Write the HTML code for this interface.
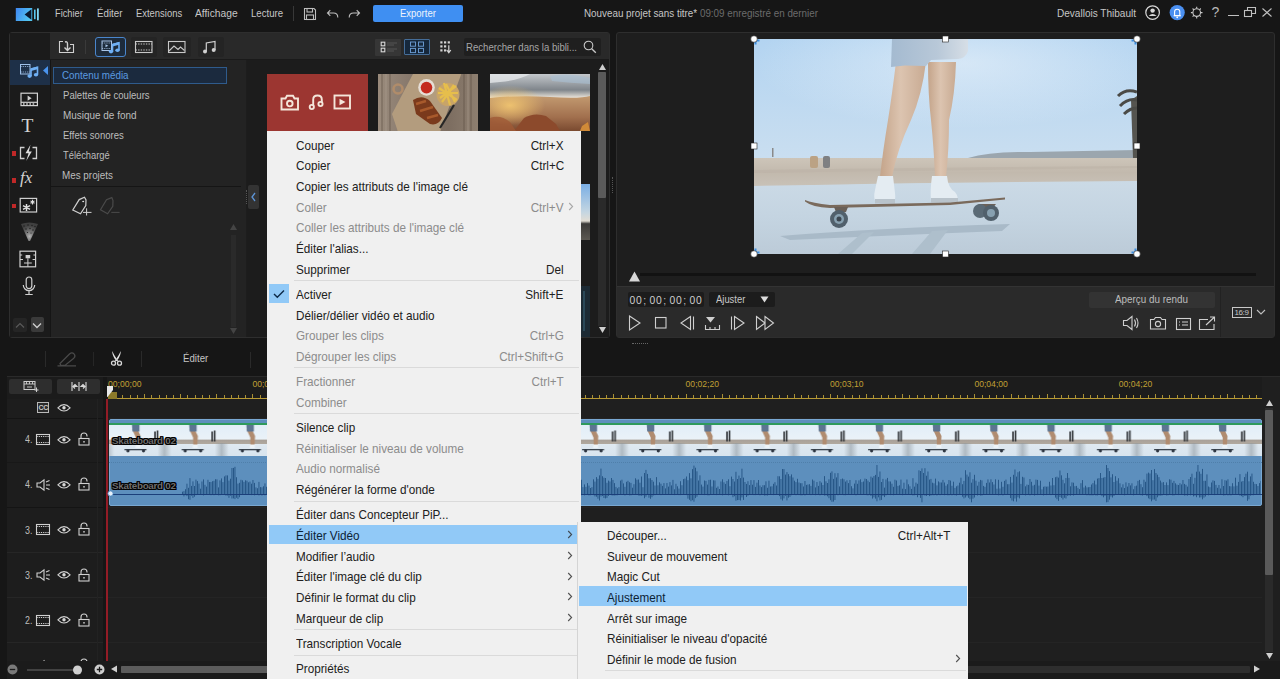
<!DOCTYPE html>
<html><head><meta charset="utf-8">
<style>
*{margin:0;padding:0;box-sizing:border-box}
html,body{width:1280px;height:679px;overflow:hidden;background:#161616;font-family:"Liberation Sans",sans-serif}
body{position:relative}
.a{position:absolute}
.t{position:absolute;white-space:pre;line-height:1}
svg{position:absolute;overflow:visible}
.menu{color:#c4c4c4;font-size:9.6px;top:9px}
.cat{position:absolute;white-space:pre;line-height:1;color:#bcbcbc;font-size:9.8px;left:62px}
.mi{position:absolute;left:0;width:100%;height:19.8px;font-size:13px;color:#202020}
.mi span{position:absolute;top:4.4px;white-space:pre;line-height:1;transform:scaleX(0.9);transform-origin:0 0}
.mi .l{left:29.2px}
.mi .r{right:13.8px;transform-origin:100% 0}
.mi.d{color:#8c8c8c}
.mi.h{background:#91c9f7;color:#0c2236}
.sep{position:absolute;left:27px;right:2px;height:1px;background:#dadada}
</style></head><body>

<svg style="left:15px;top:7px" width="26" height="15" viewBox="0 0 26 15">
  <defs><linearGradient id="lg" x1="0" y1="0" x2="1" y2="0.4"><stop offset="0" stop-color="#3f86f2"/><stop offset="1" stop-color="#52c6f0"/></linearGradient></defs>
  <rect x="0.8" y="1" width="16.4" height="13" fill="url(#lg)"/>
  <path d="M16.4 2.2 L9.6 7.5 L16.4 12.8 Z" fill="#0a1a30"/>
  <rect x="19" y="2.6" width="1.6" height="9.6" fill="#5ac8f0"/>
  <rect x="22" y="1.4" width="1.8" height="12" fill="#7fd6f5"/>
</svg>
<div class="a" style="left:293px;top:6px;width:1px;height:15px;background:#383838"></div>
<svg style="left:303px;top:7px" width="14" height="14" viewBox="0 0 14 14" fill="none" stroke="#bdbdbd" stroke-width="1.1">
  <path d="M1.5 1.5 H11 L12.5 3 V12.5 H1.5 Z"/><rect x="4" y="1.5" width="5.5" height="3.5"/><rect x="3.5" y="8" width="7" height="4.5"/>
</svg>
<svg style="left:326px;top:8px" width="14" height="12" viewBox="0 0 14 12" fill="none" stroke="#bdbdbd" stroke-width="1.1">
  <path d="M4.3 2.2 L1.5 5 L4.3 7.8 M1.5 5 H7.5 Q11.8 5 11.8 9.5"/>
</svg>
<svg style="left:347px;top:8px" width="14" height="12" viewBox="0 0 14 12" fill="none" stroke="#bdbdbd" stroke-width="1.1">
  <path d="M9.7 2.2 L12.5 5 L9.7 7.8 M12.5 5 H6.5 Q2.2 5 2.2 9.5"/>
</svg>
<div class="a" style="left:373px;top:5px;width:90px;height:17px;background:#3f8ff2;border-radius:2px"></div>



<svg style="left:1145px;top:5px" width="16" height="16" viewBox="0 0 16 16">
  <circle cx="7.6" cy="7.6" r="6.8" fill="none" stroke="#d8d8d8" stroke-width="1.2"/>
  <circle cx="7.6" cy="5.6" r="2.2" fill="#d8d8d8"/>
  <path d="M3.6 11 Q7.6 6.8 11.6 11 Z" fill="#d8d8d8"/>
</svg>
<svg style="left:1169px;top:5px" width="16" height="16" viewBox="0 0 16 16">
  <circle cx="8.2" cy="7.6" r="7.6" fill="#4a8ff0"/>
  <path d="M5.6 10.5 V6.8 A2.6 2.6 0 0 1 10.8 6.8 V10.5 Z" fill="none" stroke="#fff" stroke-width="1.1"/>
  <path d="M4.6 10.8 H11.8" stroke="#fff" stroke-width="1.1"/>
  <circle cx="8.2" cy="12.3" r="0.9" fill="#fff"/>
</svg>
<svg style="left:1190px;top:6px" width="14" height="14" viewBox="0 0 14 14" fill="none" stroke="#c8c8c8" stroke-width="1.1">
  <circle cx="6.7" cy="6.6" r="3.8"/>
  <path d="M6.7 0.8 V2.6 M6.7 10.6 V12.4 M0.9 6.6 H2.7 M10.7 6.6 H12.5 M2.6 2.5 L3.9 3.8 M9.5 9.4 L10.8 10.7 M2.6 10.7 L3.9 9.4 M9.5 3.8 L10.8 2.5"/>
</svg>
<div class="t" style="left:1211.5px;top:5px;font-size:14px;color:#b8b8b8">?</div>
<div class="a" style="left:1228px;top:15px;width:11px;height:1.2px;background:#c0c0c0"></div>
<svg style="left:1244px;top:7px" width="12" height="10" viewBox="0 0 12 10" fill="none" stroke="#c0c0c0" stroke-width="1.1">
  <rect x="0.5" y="3.5" width="7" height="6"/><path d="M3.5 3.5 V0.5 H11.5 V6.5 H7.5"/>
</svg>
<svg style="left:1262px;top:8px" width="10" height="9" viewBox="0 0 10 9" stroke="#c0c0c0" stroke-width="1.1">
  <path d="M0.5 0.5 L9.5 8.5 M9.5 0.5 L0.5 8.5"/>
</svg>
<div class="t" style="left:54.70px;top:8.15px;font-size:11.05px;color:#c6c6c6;transform:scaleX(0.836);transform-origin:0 0;">Fichier</div>
<div class="t" style="left:96.50px;top:8.15px;font-size:11.05px;color:#c6c6c6;transform:scaleX(0.884);transform-origin:0 0;">Éditer</div>
<div class="t" style="left:135.60px;top:8.15px;font-size:11.05px;color:#c6c6c6;transform:scaleX(0.853);transform-origin:0 0;">Extensions</div>
<div class="t" style="left:195.00px;top:8.15px;font-size:11.05px;color:#c6c6c6;transform:scaleX(0.929);transform-origin:0 0;">Affichage</div>
<div class="t" style="left:251.10px;top:8.15px;font-size:11.05px;color:#c6c6c6;transform:scaleX(0.871);transform-origin:0 0;">Lecture</div>
<div class="t" style="left:399.80px;top:8.37px;font-size:10.90px;color:#eef4fc;transform:scaleX(0.871);transform-origin:0 0;">Exporter</div>
<div class="t" style="left:583.90px;top:8.60px;font-size:10.39px;color:#c6c6c6;transform:scaleX(0.948);transform-origin:0 0;">Nouveau projet sans titre* <span style="color:#6c6c6c">09:09 enregistré en dernier</span></div>
<div class="t" style="left:1056.70px;top:8.23px;font-size:11.19px;color:#c6c6c6;transform:scaleX(0.897);transform-origin:0 0;">Devallois Thibault</div>

<!-- LIBRARY PANEL -->
<div class="a" style="left:9px;top:32px;width:601px;height:306px;background:#1d1d1d;border:1px solid #2e2e2e;border-radius:3px"></div>
<div class="a" style="left:10px;top:33px;width:40px;height:304px;background:#1b1b1b"></div>
<div class="a" style="left:50px;top:33px;width:559px;height:27px;background:#292929;border-bottom:1px solid #1a1a1a"></div>
<div class="a" style="left:50px;top:60px;width:196px;height:277px;background:#232323;border-left:1px solid #151515"></div>
<div class="a" style="left:10px;top:60px;width:40px;height:25px;background:#1e3048"></div>
<div class="a" style="left:53px;top:67px;width:174px;height:17px;background:#1b2a3e;border:1px solid #2f5b8c"></div>
<div class="a" style="left:51px;top:186px;width:190px;height:1px;background:#151515"></div>
<!-- tag icons -->
<svg style="left:60px;top:190px" width="70" height="32" viewBox="60 190 70 32" fill="none" stroke-width="1.2">
  <path d="M84.5 197.3 L86 200 L85.8 205.5 L80.5 213.8 L72.8 210 L79.2 199.6 Z" stroke="#d0d0d0"/><ellipse cx="83.2" cy="201.5" rx="1" ry="0.7" fill="#e0e0e0" stroke="none"/>
  <path d="M83 212.4 H91.5 M86.6 208.3 V215.5" stroke="#cfcfcf" stroke-width="1"/>
  <path d="M111.8 197.6 L113 200.5 L112.8 206.3 L107.6 213.8 L100.5 209.7 L106.5 199.8 Z" stroke="#4a4a4a"/>
  <path d="M111.3 212.4 H119.6" stroke="#4a4a4a" stroke-width="1"/>
</svg>
<!-- category scrollbar -->
<div class="a" style="left:231px;top:235px;width:5px;height:92px;background:#2a2a2a"></div>
<svg style="left:229px;top:223px" width="9" height="8" viewBox="0 0 9 8"><path d="M4.5 1 L8 7 H1 Z" fill="#444"/></svg>
<svg style="left:229px;top:327px" width="9" height="8" viewBox="0 0 9 8"><path d="M4.5 7 L8 1 H1 Z" fill="#444"/></svg>
<div class="a" style="left:247px;top:60px;width:362px;height:277px;background:#1c1c1c"></div>
<!-- collapse btn -->
<div class="a" style="left:248px;top:185px;width:11px;height:24px;background:#333;border-radius:2px"></div>
<svg style="left:250px;top:192px" width="7" height="10" viewBox="0 0 7 10" fill="none" stroke="#5d94d6" stroke-width="1.3"><path d="M5 1 L2 5 L5 9"/></svg>
<div class="a" style="left:246px;top:190px;width:1px;height:14px;border-left:1px dotted #555"></div>
<!-- left column icons -->
<svg style="left:19px;top:63px" width="30" height="16" viewBox="0 0 30 16">
  <rect x="1.5" y="1.5" width="9.5" height="9.5" fill="none" stroke="#9fc0e8" stroke-width="1"/>
  <path d="M1.5 3.5 H11 M1.5 9 H11" stroke="#9fc0e8" stroke-width="0.8" stroke-dasharray="1.2 1"/>
  <path d="M12 13 V6 L18.5 4.3 V11.5" fill="none" stroke="#6fb0f5" stroke-width="1.6"/>
  <path d="M12 5.3 L18.5 3.5 V6.3 L12 8.1 Z" fill="#6fb0f5"/>
  <ellipse cx="10.6" cy="13.1" rx="2.2" ry="1.8" fill="#6fb0f5"/><ellipse cx="17" cy="11.7" rx="2.2" ry="1.8" fill="#6fb0f5"/>
  <path d="M29 3 L24 7.5 L29 12 Z" fill="#4a94ee"/>
</svg>
<svg style="left:20px;top:92px" width="19" height="15" viewBox="0 0 19 15" fill="none" stroke="#d2d2d2" stroke-width="1.2">
  <rect x="1" y="1.2" width="16.4" height="12.4"/><path d="M1 10.3 H17.4"/><path d="M7.6 3.6 L11.6 6.2 L7.6 8.8 Z" fill="#d2d2d2" stroke="none"/>
  <path d="M3 12 H4.6 M6.2 12 H7.8 M9.4 12 H11 M12.6 12 H14.2" stroke-width="1.6"/>
</svg>
<div class="t" style="left:21.6px;top:116.2px;font-family:'Liberation Serif',serif;font-size:19.5px;color:#d4d4d4">T</div>
<svg style="left:19px;top:144px" width="19" height="18" viewBox="0 0 19 18" fill="none" stroke="#cfcfcf" stroke-width="1.3">
  <path d="M5.5 3.5 H1.5 V14.5 H5.5 M13.5 3.5 H17.5 V14.5 H13.5"/>
  <path d="M11.5 0.8 L6.5 9.3 H9.6 L7.2 17 L12.8 7.6 H9.8 Z" fill="#dcdcdc" stroke="none"/>
</svg>
<div class="a" style="left:11.5px;top:150.5px;width:4px;height:5px;background:#c02828"></div>
<div class="t" style="left:20px;top:168.5px;font-family:'Liberation Serif',serif;font-style:italic;font-size:17px;color:#d4d4d4">fx</div>
<div class="a" style="left:11.5px;top:178px;width:4px;height:4.5px;background:#c02828"></div>
<svg style="left:19px;top:197px" width="19" height="17" viewBox="0 0 19 17" fill="none" stroke="#cfcfcf" stroke-width="1.2">
  <rect x="1.2" y="1.4" width="16.4" height="13.6"/>
  <path d="M7.5 7 V14 M4 8.7 L11 12.3 M11 8.7 L4 12.3" stroke="#e0e0e0" stroke-width="1.5"/>
  <path d="M13.5 2.8 V7.4 M11.5 3.9 L15.5 6.3 M15.5 3.9 L11.5 6.3" stroke="#e0e0e0" stroke-width="1.1"/>
</svg>
<div class="a" style="left:11.5px;top:204.2px;width:4px;height:4px;background:#c02828"></div>
<svg style="left:20px;top:222px" width="19" height="20" viewBox="0 0 19 20">
  <defs><radialGradient id="spk" cx="0.5" cy="0.75" r="0.6"><stop offset="0" stop-color="#d8d8d8"/><stop offset="1" stop-color="#777" stop-opacity=".5"/></radialGradient></defs>
  <path d="M1 2 Q9 -1 18 2 L10 19 L8.5 19 Z" fill="url(#spk)" opacity=".8"/>
  <g fill="#1b1b1b"><circle cx="4" cy="4" r=".7"/><circle cx="8" cy="3" r=".7"/><circle cx="12" cy="3.5" r=".7"/><circle cx="15" cy="4.5" r=".7"/><circle cx="6" cy="7" r=".7"/><circle cx="10" cy="6.5" r=".7"/><circle cx="13" cy="8" r=".7"/><circle cx="7.5" cy="10.5" r=".6"/><circle cx="11" cy="11" r=".6"/></g>
</svg>
<svg style="left:19px;top:250px" width="18" height="18" viewBox="0 0 18 18" fill="none" stroke="#cfcfcf" stroke-width="1.2">
  <rect x="1" y="1.2" width="15.6" height="15.6"/><rect x="6.6" y="5" width="4.6" height="3.3" fill="#cfcfcf" stroke="none"/>
  <path d="M8.9 8.3 V16.8 M1 9.5 H4 M13.6 9.5 H16.6 M5 13 H12.8" stroke-width="1"/>
  <path d="M1 5 H3.2 M14.4 5 H16.6" stroke-width="1"/>
</svg>
<svg style="left:22px;top:276px" width="15" height="20" viewBox="0 0 15 20" fill="none" stroke="#d0d0d0" stroke-width="1.2">
  <rect x="4.2" y="1" width="5.6" height="11.6" rx="2.8"/><path d="M1.3 9 A5.7 5.7 0 0 0 12.7 9 M7 14.7 V18.5 M3.3 18.5 H10.7"/>
</svg>
<div class="a" style="left:13px;top:317.5px;width:14px;height:14px;background:#252525;border-radius:2px"></div>
<svg style="left:15px;top:321.5px" width="10" height="7" viewBox="0 0 10 7" fill="none" stroke="#5a5a5a" stroke-width="1.2"><path d="M1 5.5 L5 1.5 L9 5.5"/></svg>
<div class="a" style="left:30.5px;top:317px;width:13px;height:14.5px;background:#3a3a3a;border-radius:2px"></div>
<svg style="left:32px;top:321.5px" width="10" height="7" viewBox="0 0 10 7" fill="none" stroke="#d0d0d0" stroke-width="1.3"><path d="M1 1.5 L5 5.5 L9 1.5"/></svg>
<!-- toolbar -->
<svg style="left:58px;top:40px" width="18" height="14" viewBox="0 0 18 14" fill="none" stroke="#d0d0d0" stroke-width="1.1">
  <path d="M5 1.5 H1.5 V12.5 H15.5 V4.5 H12"/><path d="M7 2 Q9.5 1 9.5 4 V10 M6.5 7.5 L9.5 10.5 L12.5 7.5" stroke-width="1.4"/>
</svg>
<div class="a" style="left:85px;top:40px;width:1px;height:14px;background:#3a3a3a"></div>
<div class="a" style="left:95px;top:37px;width:31px;height:20px;background:#1d2b3b;border:1px solid #4a86cc;border-radius:3px"></div>
<svg style="left:101px;top:39.5px" width="20" height="14" viewBox="0 0 20 14">
  <rect x="1" y="1" width="9.5" height="9.5" fill="none" stroke="#a9c4e6" stroke-width="1"/>
  <path d="M1 3 H10.5 M1 8.5 H10.5" stroke="#a9c4e6" stroke-width="0.8" stroke-dasharray="1.2 1"/>
  <path d="M4.5 4.3 L7.3 5.8 L4.5 7.3 Z" fill="#a9c4e6"/>
  <path d="M11.5 11.5 V4.5 L18 2.8 V10" fill="none" stroke="#6fb0f5" stroke-width="1.6"/>
  <path d="M11.5 3.8 L18 2 V4.8 L11.5 6.6 Z" fill="#6fb0f5"/>
  <ellipse cx="10" cy="11.6" rx="2.2" ry="1.8" fill="#6fb0f5"/><ellipse cx="16.5" cy="10.2" rx="2.2" ry="1.8" fill="#6fb0f5"/>
</svg>
<div class="a" style="left:131px;top:37px;width:26px;height:20px;background:#242424;border-radius:2px"></div>
<svg style="left:135px;top:41px" width="18" height="12" viewBox="0 0 18 12" fill="none" stroke="#c8c8c8" stroke-width="1.1">
  <rect x="0.5" y="0.5" width="16.5" height="11"/><path d="M0.5 3 H17 M0.5 9 H17" stroke-dasharray="1.4 1.2"/>
</svg>
<div class="a" style="left:163px;top:37px;width:28px;height:20px;background:#242424;border-radius:2px"></div>
<svg style="left:168px;top:41px" width="18" height="12" viewBox="0 0 18 12" fill="none" stroke="#c8c8c8" stroke-width="1.1">
  <rect x="0.5" y="0.5" width="16.5" height="11"/><path d="M1 10 L6 5 L10 8.5 L12.5 6 L16.5 9.5"/>
</svg>
<div class="a" style="left:198px;top:37px;width:26px;height:20px;background:#242424;border-radius:2px"></div>
<svg style="left:202px;top:40px" width="16" height="14" viewBox="0 0 16 14" fill="#d0d0d0">
  <path d="M4.3 11.5 V3 L13 1.5 V10" fill="none" stroke="#d0d0d0" stroke-width="1.2"/><circle cx="3" cy="11.5" r="2"/><circle cx="11.7" cy="10" r="2"/>
</svg>
<!-- view buttons -->
<div class="a" style="left:375px;top:38.6px;width:26px;height:17px;background:#363636;border-radius:1px"></div>
<svg style="left:380px;top:41px" width="20" height="12" viewBox="0 0 20 12" fill="none">
  <rect x="1.2" y="1.2" width="3.6" height="3.6" stroke="#d8d8d8" stroke-width="1.1"/><rect x="1.2" y="7.2" width="3.6" height="3.6" stroke="#d8d8d8" stroke-width="1.1"/>
  <path d="M7 2 H17 M7 4 H14 M7 8 H17 M7 10 H14" stroke="#5a5a5a" stroke-width="0.9"/>
</svg>
<div class="a" style="left:404.4px;top:39.4px;width:26px;height:16px;background:#16283c;border:1px solid #456d98;border-radius:1px"></div>
<svg style="left:409px;top:40.5px" width="16" height="13" viewBox="0 0 16 13" fill="none" stroke="#6b9bd2" stroke-width="0.95">
  <rect x="1.5" y="1" width="5" height="4.2"/><rect x="9.5" y="1" width="5" height="4.2"/><rect x="1.5" y="7.4" width="5" height="4.2"/><rect x="9.5" y="7.4" width="5" height="4.2"/>
</svg>
<svg style="left:440px;top:41px" width="14" height="12" viewBox="0 0 14 12" fill="#d4d4d4">
  <rect x="0.3" y="0.3" width="2.2" height="2.2"/><rect x="4" y="0.3" width="2.2" height="2.2"/><rect x="7.7" y="0.3" width="2.2" height="2.2"/>
  <rect x="0.3" y="4.3" width="2.2" height="2.2"/><rect x="4" y="4.3" width="2.2" height="2.2"/>
  <rect x="0.3" y="8.3" width="2.2" height="2.2"/><rect x="4" y="8.3" width="2.2" height="2.2"/>
  <path d="M8.8 4.2 V11.5 M6.8 9 L8.8 11.7 L10.8 9" fill="none" stroke="#d4d4d4" stroke-width="1.2"/>
</svg>
<div class="a" style="left:464px;top:38px;width:137px;height:18px;background:#1f1f1f;border-radius:2px"></div>

<svg style="left:583px;top:40px" width="14" height="14" viewBox="0 0 14 14" fill="none" stroke="#c8c8c8" stroke-width="1.1">
  <circle cx="5.5" cy="5.5" r="4.3"/><path d="M8.7 8.7 L12.8 12.8" stroke-width="1.3"/>
</svg>
<!-- media grid -->
<div class="a" style="left:267px;top:74px;width:101px;height:57px;background:#9c3631"></div>
<svg style="left:267px;top:74px" width="101" height="57" viewBox="267 74 101 57" fill="none" stroke="#f4e6da" stroke-width="1.9">
  <path d="M281.5 98.5 H285.5 L287 95.8 H293 L294.5 98.5 H298 V109.5 H281.5 Z"/><circle cx="289.8" cy="103.6" r="2.8"/>
  <path d="M313.2 106 V99.5 Q313.2 95.5 317.5 95.5 Q321.8 95.5 321.8 99.5 V103"/><circle cx="311.8" cy="107" r="2.1"/><circle cx="320.5" cy="104" r="2.1"/>
  <rect x="334.5" y="95.5" width="15.5" height="13"/><path d="M339.5 98.8 L345.5 102 L339.5 105.2 Z" fill="#f4e6da" stroke="none"/>
</svg>
<!-- food thumb -->
<svg style="left:378px;top:74px;overflow:hidden" width="100" height="57" viewBox="0 0 100 57">
  <defs>
    <linearGradient id="wood" x1="0" y1="0" x2="1" y2="0"><stop offset="0" stop-color="#9a8b7c"/><stop offset="0.35" stop-color="#85766a"/><stop offset="0.7" stop-color="#7c6d60"/><stop offset="1" stop-color="#8e7f70"/></linearGradient>
  </defs>
  <rect width="100" height="57" fill="url(#wood)"/>
  <path d="M4 0 V57 M12 0 V57 M86 0 V57 M93 0 V57" stroke="#5e5044" stroke-width="1.2" opacity=".55"/>
  <path d="M8 0 V57 M90 0 V57" stroke="#b0a294" stroke-width="1" opacity=".5"/>
  <path d="M36 -2 L84 -2 L62 58 L20 58 L14 40 Z" fill="#b39c7e"/>
  <circle cx="20" cy="15" r="4.5" fill="none" stroke="#b08c6a" stroke-width="2.6"/>
  <circle cx="48.5" cy="13.4" r="8.3" fill="#e6ded6"/><circle cx="48.5" cy="13.6" r="5.8" fill="#c42a1e"/>
  <circle cx="70" cy="20.5" r="11.5" fill="#c8a468"/>
  <path d="M61 14 L79 26 M62 24 L78 12 M66 9 L72 31 M60 19 L80 19 M64 28 L76 11 M68 10 L77 28" stroke="#e6be4c" stroke-width="2.2"/>
  <path d="M35 26 Q44 20 52 27 L64 44 Q60 52 52 50 L38 40 Z" fill="#7a3a1c"/>
  <path d="M38 30 L48 27 M42 37 L55 33 M49 44 L60 41" stroke="#a85a2c" stroke-width="2.4"/>
  <path d="M76 31 L62 54" stroke="#262626" stroke-width="2.2"/>
</svg>
<!-- canyon thumb -->
<svg style="left:490px;top:74px;overflow:hidden" width="100" height="57" viewBox="0 0 100 57">
  <defs>
    <linearGradient id="csky" x1="0" y1="0" x2="0" y2="1"><stop offset="0" stop-color="#c4c8cc"/><stop offset="0.28" stop-color="#7f858b"/><stop offset="0.42" stop-color="#ece6dc"/><stop offset="0.5" stop-color="#e0d4c0"/></linearGradient>
    <linearGradient id="cland" x1="0" y1="0" x2="0" y2="1"><stop offset="0" stop-color="#c29a70"/><stop offset="0.6" stop-color="#a2704e"/><stop offset="1" stop-color="#7a4a30"/></linearGradient>
    <radialGradient id="glow" cx="0.2" cy="0.55" r="0.35"><stop offset="0" stop-color="#f0c470" stop-opacity=".95"/><stop offset="1" stop-color="#f0c470" stop-opacity="0"/></radialGradient>
  </defs>
  <rect width="100" height="57" fill="url(#csky)"/>
  <path d="M0 0 H40 Q30 6 10 8 L0 9 Z" fill="#e4e6e8" opacity=".8"/>
  <path d="M60 2 Q80 -2 100 4 V10 Q80 9 62 7 Z" fill="#a8c0d4" opacity=".6"/>
  <path d="M0 24 Q30 21 60 23 T100 22 V57 H0 Z" fill="url(#cland)"/>
  <rect width="100" height="57" fill="url(#glow)"/>
  <path d="M24 57 L34 44 Q44 38 56 42 L66 50 L70 57 Z" fill="#8c4a2c"/>
  <path d="M0 44 Q10 40 20 48 L26 57 H0 Z" fill="#a05a36" opacity=".8"/>
  <path d="M92 52 L98 48 L100 57 H90 Z" fill="#d08a38"/>
</svg>
<!-- row 2/3 partial thumbs -->
<svg style="left:490px;top:184px" width="100" height="56" viewBox="0 0 100 56">
  <defs><linearGradient id="r2" x1="0" y1="0" x2="0" y2="1"><stop offset="0" stop-color="#7aaee4"/><stop offset="0.5" stop-color="#c4d6e2"/><stop offset="0.66" stop-color="#e2ddd4"/><stop offset="0.71" stop-color="#3c3a38"/><stop offset="1" stop-color="#5c5852"/></linearGradient></defs>
  <rect width="100" height="56" fill="url(#r2)"/>
</svg>
<svg style="left:490px;top:286px" width="100" height="51" viewBox="0 0 100 51">
  <rect width="100" height="51" fill="#1c2a34"/>
  <path d="M90 0 V51 M94 5 V45" stroke="#2a4858" stroke-width="2"/>
</svg>
<!-- grid scrollbar -->
<svg style="left:598px;top:63px" width="9" height="8" viewBox="0 0 9 8"><path d="M4.5 1 L8 7 H1 Z" fill="#cfcfcf"/></svg>
<div class="a" style="left:598px;top:72px;width:8px;height:254px;background:#2a2a2a"></div>
<div class="a" style="left:598px;top:72px;width:8px;height:126px;background:#5a5a5a;border-radius:1px"></div>
<svg style="left:598px;top:326px" width="9" height="8" viewBox="0 0 9 8"><path d="M4.5 7 L8 1 H1 Z" fill="#cfcfcf"/></svg>
<div class="a" style="left:612px;top:177px;width:1px;height:16px;border-left:1px dotted #555"></div>
<div class="t" style="left:62.40px;top:71.39px;font-size:10.17px;color:#5b9be0;transform:scaleX(0.966);transform-origin:0 0;">Contenu média</div>
<div class="t" style="left:62.90px;top:90.56px;font-size:10.32px;color:#bdbdbd;transform:scaleX(0.927);transform-origin:0 0;">Palettes de couleurs</div>
<div class="t" style="left:62.60px;top:110.56px;font-size:10.32px;color:#bdbdbd;transform:scaleX(0.964);transform-origin:0 0;">Musique de fond</div>
<div class="t" style="left:62.60px;top:130.56px;font-size:10.32px;color:#bdbdbd;transform:scaleX(0.924);transform-origin:0 0;">Effets sonores</div>
<div class="t" style="left:63.00px;top:150.56px;font-size:10.32px;color:#bdbdbd;transform:scaleX(0.906);transform-origin:0 0;">Téléchargé</div>
<div class="t" style="left:62.40px;top:170.56px;font-size:10.32px;color:#bdbdbd;transform:scaleX(0.956);transform-origin:0 0;">Mes projets</div>
<div class="t" style="left:466.00px;top:42.20px;font-size:10.76px;color:#a6a6a6;transform:scaleX(0.893);transform-origin:0 0;">Rechercher dans la bibli...</div>

<!-- PREVIEW PANEL -->
<div class="a" style="left:616px;top:32px;width:659px;height:306px;background:#1e1e1e;border:1px solid #2e2e2e;border-radius:3px"></div>
<svg style="left:754px;top:39px;overflow:hidden" width="383" height="215" viewBox="754 39 383 215">
  <defs>
    <linearGradient id="sky" x1="0" y1="0" x2="0" y2="1"><stop offset="0" stop-color="#b3d4f1"/><stop offset="0.55" stop-color="#c9def0"/><stop offset="1" stop-color="#dce7ef"/></linearGradient>
    <linearGradient id="sand" x1="0" y1="0" x2="0" y2="1"><stop offset="0" stop-color="#cdc5b9"/><stop offset="0.5" stop-color="#c2b9ad"/><stop offset="1" stop-color="#c9c2b8"/></linearGradient>
    <linearGradient id="pave" x1="0" y1="0" x2="0" y2="1"><stop offset="0" stop-color="#cbdae6"/><stop offset="0.5" stop-color="#c4d4e1"/><stop offset="1" stop-color="#bccbd8"/></linearGradient>
    <linearGradient id="leg" x1="0" y1="0" x2="1" y2="0"><stop offset="0" stop-color="#c4a48a"/><stop offset="0.45" stop-color="#dcc4b0"/><stop offset="1" stop-color="#c8aa92"/></linearGradient>
    <radialGradient id="haze" cx="0.55" cy="0.2" r="0.55"><stop offset="0" stop-color="#f4f8fc" stop-opacity="0.5"/><stop offset="1" stop-color="#f4f8fc" stop-opacity="0"/></radialGradient>
    <linearGradient id="shorts" x1="0" y1="0" x2="1" y2="0"><stop offset="0" stop-color="#a4bad0"/><stop offset="0.6" stop-color="#b8c8d8"/><stop offset="1" stop-color="#d6dee6"/></linearGradient>
  </defs>
  <rect x="754" y="39" width="383" height="215" fill="url(#sky)"/>
  <rect x="754" y="39" width="383" height="120" fill="url(#haze)"/>
  <path d="M968 158 Q990 151 1030 152 L1137 150 V160 H968 Z" fill="#9ba6ae"/>
  <path d="M754 158 H1137 V183 Q1000 182 900 184 T754 187 Z" fill="url(#sand)"/>
  <path d="M754 170 Q900 168 1137 166 V168 Q900 171 754 173 Z" fill="#bcb2a6" opacity=".6"/>
  <path d="M754 186 Q950 182 1137 181 V254 H754 Z" fill="url(#pave)"/>
  <rect x="810" y="156" width="8" height="12" rx="2" fill="#bba284"/><rect x="823" y="156" width="7" height="12" rx="2" fill="#7f8082"/>
  <rect x="772" y="148" width="1.5" height="9" fill="#8a8a8a"/>
  <!-- shadow -->
  <path d="M780 236 Q880 228 1010 224 L1002 231 Q900 235 790 240 Z" fill="#a9bac8"/>
  <path d="M838 254 L862 233 L874 232 L852 254 Z M912 254 L932 231 L948 230 L930 254 Z" fill="#aebfcc"/>
  <!-- legs -->
  <path d="M896 62 Q892 95 888 120 Q883 150 880 177 L892 177 Q897 150 911 120 Q922 95 926 62 Z" fill="url(#leg)"/>
  <path d="M928 62 Q928 95 931 120 Q934 150 935 177 L946 177 Q949 150 949 120 Q955 95 956 62 Z" fill="url(#leg)"/>
  <!-- shorts -->
  <path d="M892 39 H968 V51 Q966 58 958 59 L931 60 L926 66 L905 65.5 L891 67 Z" fill="url(#shorts)"/>
  <!-- shoes -->
  <path d="M878 176 L893 176 L895 193 Q896 201 893 203 L876 203 Q873 198 875 190 Z" fill="#e4ecf2"/>
  <path d="M875 199 H895 V203.5 H875 Z" fill="#b9c3cb"/>
  <path d="M932 176 L947 176 Q948 188 955 192 Q959 197 957 202 L931 202 Q930 190 932 176 Z" fill="#e4ecf2"/>
  <path d="M931 198 H958 V202.5 H931 Z" fill="#b9c3cb"/>
  <!-- board -->
  <path d="M805 200 Q812 203 830 205 L950 202.5 L1005 197.5 L1005 199.5 L950 205 L830 208 Q812 207 805 201.5 Z" fill="#7a6a5c"/>
  <path d="M834 207 H848 L846 212 H836 Z M978 204 H996 L992 209 H982 Z" fill="#6a6058"/>
  <circle cx="839" cy="219" r="9" fill="#51606c"/><circle cx="839" cy="219" r="5" fill="#87a0b0"/><circle cx="839" cy="219" r="2.5" fill="#3c4650"/>
  <circle cx="980" cy="211" r="7" fill="#5a6a76"/><circle cx="991" cy="213" r="8" fill="#51606c"/><circle cx="991" cy="213" r="4" fill="#87a0b0"/>
  <!-- palm -->
  <path d="M1131 100 L1133 158 L1137 158 L1137 96 Z" fill="#55544f"/>
  <path d="M1118 96 Q1126 88 1137 92 M1120 106 Q1128 98 1137 100 M1124 114 Q1130 108 1137 108" stroke="#4a4a46" stroke-width="3" fill="none"/>
</svg>
<!-- handles -->
<svg style="left:750px;top:35px" width="392" height="224" viewBox="0 0 392 224">
  <g fill="#3d8ee0"><path d="M4.5 4.5 h5 v2 h-3 v3 h-2 z"/><path d="M386.5 4.5 h-5 v2 h3 v3 h2 z"/><path d="M4.5 218.5 h5 v-2 h-3 v-3 h-2 z"/><path d="M386.5 218.5 h-5 v-2 h3 v-3 h2 z"/></g>
  <g fill="#fff" stroke="#222" stroke-width="0.6">
    <circle cx="4" cy="4" r="3.3"/><circle cx="387" cy="4" r="3.3"/><circle cx="4" cy="219" r="3.3"/><circle cx="387" cy="219" r="3.3"/>
    <rect x="192.5" y="1" width="6" height="6"/><rect x="192.5" y="216" width="6" height="6"/><rect x="1" y="108" width="6" height="6"/><rect x="384" y="108" width="6" height="6"/>
  </g>
</svg>
<!-- seek -->
<div class="a" style="left:640px;top:273px;width:616px;height:3px;background:#121212"></div>
<svg style="left:629px;top:271px" width="12" height="11" viewBox="0 0 12 11"><path d="M5.5 0.5 L11 10.5 H0 Z" fill="#d8d8d8"/></svg>
<!-- controls -->
<div class="a" style="left:617px;top:286px;width:657px;height:51px;background:#2a2a2a;border-top:1px solid #333"></div>
<div class="a" style="left:628px;top:292px;width:76px;height:15px;background:#1c1c1c;border-radius:2px"></div>

<div class="a" style="left:709px;top:292px;width:66px;height:15px;background:#1c1c1c;border-radius:2px"></div>

<svg style="left:760px;top:296px" width="9" height="7" viewBox="0 0 9 7"><path d="M0.5 0.5 H8.5 L4.5 6.5 Z" fill="#dcdcdc"/></svg>
<svg style="left:626px;top:314px" width="150" height="18" viewBox="0 0 150 18" fill="none" stroke="#cfcfcf" stroke-width="1.1">
  <path d="M3.5 2 L14 9 L3.5 16 Z"/>
  <rect x="29.5" y="3.5" width="10.5" height="10.5"/>
  <path d="M64.5 2.5 L55 9 L64.5 15.5 Z M67.5 2.5 V15.5"/>
  <path d="M80 8 L89 8 L84.5 2.5 Z" fill="#cfcfcf" stroke="none" transform="rotate(180 84.5 5.5)"/><path d="M79.5 11 V15.5 H93.5 V11 M84 13 V15.5 M89 13 V15.5"/>
  <path d="M105.5 2.5 V15.5 M108.5 2.5 L118 9 L108.5 15.5 Z"/>
  <path d="M130.5 2.5 L139 9 L130.5 15.5 Z M139 2.5 L147.5 9 L139 15.5 Z"/>
</svg>
<div class="a" style="left:1089px;top:292px;width:126px;height:16px;background:#333;border-radius:2px"></div>

<svg style="left:1121px;top:314px" width="100" height="18" viewBox="0 0 100 18" fill="none" stroke="#cfcfcf" stroke-width="1.1">
  <path d="M2.5 6.5 H6 L11 2.5 V15.5 L6 11.5 H2.5 Z M13.5 5.5 Q15.5 9 13.5 12.5 M15.5 4 Q18.5 9 15.5 14"/>
  <path d="M29.5 5.5 H33 L34.5 3.5 H39.5 L41 5.5 H44.5 V15 H29.5 Z"/><circle cx="37" cy="10" r="2.6"/>
  <rect x="55.5" y="4.5" width="14" height="11"/><path d="M58 8 H59 M61 8 H67 M58 11 H59 M61 11 H67"/>
  <path d="M87 5.5 H78.5 V15.5 H93 V10"/><path d="M85 11 L93.5 3 M89 3 H93.5 V7.5"/>
</svg>
<div class="a" style="left:1220px;top:287px;width:1px;height:50px;background:#222"></div>
<div class="a" style="left:1232px;top:307px;width:20px;height:11px;border:1px solid #c8c8c8"></div>
<div class="t" style="left:1234.5px;top:309px;font-size:8px;color:#c8c8c8;letter-spacing:-0.4px">16:9</div>
<svg style="left:1256px;top:309px" width="10" height="7" viewBox="0 0 10 7" fill="none" stroke="#c0c0c0" stroke-width="1.1"><path d="M1 1 L5 5 L9 1"/></svg>
<div class="a" style="left:632px;top:343px;width:16px;height:1px;border-top:1px dotted #666"></div>
<div class="t" style="left:629.4px;top:295.98px;font-size:10.3px;color:#d0d0d0;letter-spacing:0.9px">00</div>
<div class="t" style="left:643.3px;top:295.98px;font-size:10.3px;color:#bdbdbd">;</div>
<div class="t" style="left:649.4px;top:295.98px;font-size:10.3px;color:#d0d0d0;letter-spacing:0.9px">00</div>
<div class="t" style="left:663.3px;top:295.98px;font-size:10.3px;color:#bdbdbd">;</div>
<div class="t" style="left:669.4px;top:295.98px;font-size:10.3px;color:#d0d0d0;letter-spacing:0.9px">00</div>
<div class="t" style="left:683.3px;top:295.98px;font-size:10.3px;color:#bdbdbd">;</div>
<div class="t" style="left:689.4px;top:295.98px;font-size:10.3px;color:#d0d0d0;letter-spacing:0.9px">00</div>
<div class="t" style="left:715.90px;top:294.60px;font-size:10.39px;color:#c8c8c8;transform:scaleX(0.908);transform-origin:0 0;">Ajuster</div>
<div class="t" style="left:1115.20px;top:294.99px;font-size:10.17px;color:#bdbdbd;transform:scaleX(0.972);transform-origin:0 0;">Aperçu du rendu</div>

<!-- EDIT TOOLBAR -->
<div class="a" style="left:45px;top:351px;width:1px;height:16px;background:#2a2a2a"></div>
<div class="a" style="left:93px;top:352px;width:1px;height:14px;background:#262626"></div>
<div class="a" style="left:141px;top:351px;width:1px;height:16px;background:#2a2a2a"></div>
<div class="a" style="left:250px;top:352px;width:1px;height:16px;background:#2a2a2a"></div>
<svg style="left:56px;top:350px" width="22" height="18" viewBox="0 0 22 18" fill="none" stroke="#4a4a4a" stroke-width="1.2">
  <path d="M4 13.5 L13.5 4 Q16 1.8 18 3.8 Q20 6 17.8 8.2 L9.5 15 L5 15.5 Z M1.5 15.8 H20"/>
</svg>
<svg style="left:109px;top:350px" width="15" height="17" viewBox="0 0 15 17">
  <path d="M3.2 1 Q3 5 6.5 10 L7.8 9 Q5 5 3.2 1 Z M11.8 1 Q12 5 8.5 10 L7.2 9 Q10 5 11.8 1 Z" fill="#e0e0e0"/>
  <circle cx="4.5" cy="13.2" r="2" fill="none" stroke="#d8d8d8" stroke-width="1.3"/><circle cx="10.5" cy="13.2" r="2" fill="none" stroke="#d8d8d8" stroke-width="1.3"/>
  <path d="M5.8 11.5 L7.5 9.5 L9.2 11.5" fill="none" stroke="#d8d8d8" stroke-width="1.1"/>
</svg>


<!-- TIMELINE -->
<div class="a" style="left:7px;top:376px;width:1273px;height:303px;background:#1f1f1f;border-top:1px solid #2a2a2a"></div>
<div class="a" style="left:7px;top:377px;width:96px;height:22px;background:#1b1b1b"></div>
<div class="a" style="left:9px;top:379px;width:43px;height:15px;background:#2e2e2e;border-radius:2px"></div>
<svg style="left:23px;top:380px" width="16" height="13" viewBox="0 0 16 13" fill="none" stroke="#cfcfcf" stroke-width="1">
  <rect x="1" y="1.5" width="11" height="8"/><path d="M1 4 H12 M3.5 1.5 V4 M6.5 1.5 V4 M9.5 1.5 V4 M4 7 H9" stroke-width="0.9"/><path d="M13.5 7.5 V12 M11.5 10 H15.5"/>
</svg>
<div class="a" style="left:57px;top:379px;width:43px;height:15px;background:#2e2e2e;border-radius:2px"></div>
<svg style="left:71px;top:381px" width="16" height="11" viewBox="0 0 16 11" fill="none" stroke="#d8d8d8" stroke-width="1.1">
  <path d="M1 1 V10 M15 1 V10 M8 1 V10"/><path d="M2 5.5 H6 L4 3.5 Z M14 5.5 H10 L12 3.5 Z M2 5.5 L4 7.5 M14 5.5 L12 7.5" fill="#d8d8d8"/>
</svg>
<!-- ruler -->
<div class="a" style="left:104px;top:377px;width:1158px;height:22px;background:#1c1c1c"></div>
<div class="a" style="left:108px;top:398px;width:1154px;height:1px;background:#b89a34"></div>
<svg style="left:108px;top:393px" width="1154" height="6" viewBox="0 0 1154 6" fill="#a89034"><rect x="0" y="1" width="1" height="4"/><rect x="7" y="2" width="1" height="3"/><rect x="14" y="2" width="1" height="3"/><rect x="22" y="2" width="1" height="3"/><rect x="29" y="2" width="1" height="3"/><rect x="36" y="1" width="1" height="4"/><rect x="43" y="2" width="1" height="3"/><rect x="51" y="2" width="1" height="3"/><rect x="58" y="2" width="1" height="3"/><rect x="65" y="2" width="1" height="3"/><rect x="72" y="1" width="1" height="4"/><rect x="79" y="2" width="1" height="3"/><rect x="87" y="2" width="1" height="3"/><rect x="94" y="2" width="1" height="3"/><rect x="101" y="2" width="1" height="3"/><rect x="108" y="1" width="1" height="4"/><rect x="116" y="2" width="1" height="3"/><rect x="123" y="2" width="1" height="3"/><rect x="130" y="2" width="1" height="3"/><rect x="137" y="2" width="1" height="3"/><rect x="144" y="1" width="1" height="4"/><rect x="152" y="2" width="1" height="3"/><rect x="159" y="2" width="1" height="3"/><rect x="166" y="2" width="1" height="3"/><rect x="173" y="2" width="1" height="3"/><rect x="181" y="1" width="1" height="4"/><rect x="188" y="2" width="1" height="3"/><rect x="195" y="2" width="1" height="3"/><rect x="202" y="2" width="1" height="3"/><rect x="209" y="2" width="1" height="3"/><rect x="217" y="1" width="1" height="4"/><rect x="224" y="2" width="1" height="3"/><rect x="231" y="2" width="1" height="3"/><rect x="238" y="2" width="1" height="3"/><rect x="245" y="2" width="1" height="3"/><rect x="253" y="1" width="1" height="4"/><rect x="260" y="2" width="1" height="3"/><rect x="267" y="2" width="1" height="3"/><rect x="274" y="2" width="1" height="3"/><rect x="282" y="2" width="1" height="3"/><rect x="289" y="1" width="1" height="4"/><rect x="296" y="2" width="1" height="3"/><rect x="303" y="2" width="1" height="3"/><rect x="310" y="2" width="1" height="3"/><rect x="318" y="2" width="1" height="3"/><rect x="325" y="1" width="1" height="4"/><rect x="332" y="2" width="1" height="3"/><rect x="339" y="2" width="1" height="3"/><rect x="347" y="2" width="1" height="3"/><rect x="354" y="2" width="1" height="3"/><rect x="361" y="1" width="1" height="4"/><rect x="368" y="2" width="1" height="3"/><rect x="375" y="2" width="1" height="3"/><rect x="383" y="2" width="1" height="3"/><rect x="390" y="2" width="1" height="3"/><rect x="397" y="1" width="1" height="4"/><rect x="404" y="2" width="1" height="3"/><rect x="412" y="2" width="1" height="3"/><rect x="419" y="2" width="1" height="3"/><rect x="426" y="2" width="1" height="3"/><rect x="433" y="1" width="1" height="4"/><rect x="440" y="2" width="1" height="3"/><rect x="448" y="2" width="1" height="3"/><rect x="455" y="2" width="1" height="3"/><rect x="462" y="2" width="1" height="3"/><rect x="469" y="1" width="1" height="4"/><rect x="477" y="2" width="1" height="3"/><rect x="484" y="2" width="1" height="3"/><rect x="491" y="2" width="1" height="3"/><rect x="498" y="2" width="1" height="3"/><rect x="505" y="1" width="1" height="4"/><rect x="513" y="2" width="1" height="3"/><rect x="520" y="2" width="1" height="3"/><rect x="527" y="2" width="1" height="3"/><rect x="534" y="2" width="1" height="3"/><rect x="542" y="1" width="1" height="4"/><rect x="549" y="2" width="1" height="3"/><rect x="556" y="2" width="1" height="3"/><rect x="563" y="2" width="1" height="3"/><rect x="570" y="2" width="1" height="3"/><rect x="578" y="1" width="1" height="4"/><rect x="585" y="2" width="1" height="3"/><rect x="592" y="2" width="1" height="3"/><rect x="599" y="2" width="1" height="3"/><rect x="606" y="2" width="1" height="3"/><rect x="614" y="1" width="1" height="4"/><rect x="621" y="2" width="1" height="3"/><rect x="628" y="2" width="1" height="3"/><rect x="635" y="2" width="1" height="3"/><rect x="643" y="2" width="1" height="3"/><rect x="650" y="1" width="1" height="4"/><rect x="657" y="2" width="1" height="3"/><rect x="664" y="2" width="1" height="3"/><rect x="671" y="2" width="1" height="3"/><rect x="679" y="2" width="1" height="3"/><rect x="686" y="1" width="1" height="4"/><rect x="693" y="2" width="1" height="3"/><rect x="700" y="2" width="1" height="3"/><rect x="708" y="2" width="1" height="3"/><rect x="715" y="2" width="1" height="3"/><rect x="722" y="1" width="1" height="4"/><rect x="729" y="2" width="1" height="3"/><rect x="736" y="2" width="1" height="3"/><rect x="744" y="2" width="1" height="3"/><rect x="751" y="2" width="1" height="3"/><rect x="758" y="1" width="1" height="4"/><rect x="765" y="2" width="1" height="3"/><rect x="773" y="2" width="1" height="3"/><rect x="780" y="2" width="1" height="3"/><rect x="787" y="2" width="1" height="3"/><rect x="794" y="1" width="1" height="4"/><rect x="801" y="2" width="1" height="3"/><rect x="809" y="2" width="1" height="3"/><rect x="816" y="2" width="1" height="3"/><rect x="823" y="2" width="1" height="3"/><rect x="830" y="1" width="1" height="4"/><rect x="838" y="2" width="1" height="3"/><rect x="845" y="2" width="1" height="3"/><rect x="852" y="2" width="1" height="3"/><rect x="859" y="2" width="1" height="3"/><rect x="866" y="1" width="1" height="4"/><rect x="874" y="2" width="1" height="3"/><rect x="881" y="2" width="1" height="3"/><rect x="888" y="2" width="1" height="3"/><rect x="895" y="2" width="1" height="3"/><rect x="903" y="1" width="1" height="4"/><rect x="910" y="2" width="1" height="3"/><rect x="917" y="2" width="1" height="3"/><rect x="924" y="2" width="1" height="3"/><rect x="931" y="2" width="1" height="3"/><rect x="939" y="1" width="1" height="4"/><rect x="946" y="2" width="1" height="3"/><rect x="953" y="2" width="1" height="3"/><rect x="960" y="2" width="1" height="3"/><rect x="967" y="2" width="1" height="3"/><rect x="975" y="1" width="1" height="4"/><rect x="982" y="2" width="1" height="3"/><rect x="989" y="2" width="1" height="3"/><rect x="996" y="2" width="1" height="3"/><rect x="1004" y="2" width="1" height="3"/><rect x="1011" y="1" width="1" height="4"/><rect x="1018" y="2" width="1" height="3"/><rect x="1025" y="2" width="1" height="3"/><rect x="1032" y="2" width="1" height="3"/><rect x="1040" y="2" width="1" height="3"/><rect x="1047" y="1" width="1" height="4"/><rect x="1054" y="2" width="1" height="3"/><rect x="1061" y="2" width="1" height="3"/><rect x="1069" y="2" width="1" height="3"/><rect x="1076" y="2" width="1" height="3"/><rect x="1083" y="1" width="1" height="4"/><rect x="1090" y="2" width="1" height="3"/><rect x="1097" y="2" width="1" height="3"/><rect x="1105" y="2" width="1" height="3"/><rect x="1112" y="2" width="1" height="3"/><rect x="1119" y="1" width="1" height="4"/><rect x="1126" y="2" width="1" height="3"/><rect x="1134" y="2" width="1" height="3"/><rect x="1141" y="2" width="1" height="3"/><rect x="1148" y="2" width="1" height="3"/></svg>
<div class="t" style="left:108.0px;top:379.5px;font-size:8.6px;color:#c0a034">00;00;00</div>
<div class="t" style="left:252.4px;top:379.5px;font-size:8.6px;color:#c0a034">00;00;20</div>
<div class="t" style="left:396.8px;top:379.5px;font-size:8.6px;color:#c0a034">00;01;10</div>
<div class="t" style="left:541.2px;top:379.5px;font-size:8.6px;color:#c0a034">00;02;00</div>
<div class="t" style="left:685.6px;top:379.5px;font-size:8.6px;color:#c0a034">00;02;20</div>
<div class="t" style="left:830.0px;top:379.5px;font-size:8.6px;color:#c0a034">00;03;10</div>
<div class="t" style="left:974.4px;top:379.5px;font-size:8.6px;color:#c0a034">00;04;00</div>
<div class="t" style="left:1118.8px;top:379.5px;font-size:8.6px;color:#c0a034">00;04;20</div>

<svg style="left:106px;top:386px" width="12" height="13" viewBox="0 0 12 13">
  <rect x="2" y="6" width="9" height="7" fill="#8c7a2a"/>
  <path d="M0 0 H7 V4 L1.5 11 H0 Z" fill="#e8e8e8"/>
</svg>
<!-- track headers -->
<div class="a" style="left:7px;top:399px;width:96px;height:280px;background:#1d1d1d"></div>
<div class="a" style="left:103px;top:377px;width:4px;height:302px;background:#161616"></div>
<div class="a" style="left:7px;top:417.5px;width:96px;height:1.2px;background:#141414"></div>
<div class="a" style="left:107px;top:417.5px;width:1155px;height:1px;background:#242424"></div>
<div class="a" style="left:7px;top:462px;width:96px;height:1.2px;background:#181818"></div>
<div class="a" style="left:107px;top:462px;width:1155px;height:1px;background:#242424"></div>
<div class="a" style="left:7px;top:506.5px;width:96px;height:1.2px;background:#141414"></div>
<div class="a" style="left:107px;top:506.5px;width:1155px;height:1px;background:#242424"></div>
<div class="a" style="left:7px;top:552px;width:96px;height:1.2px;background:#262626"></div>
<div class="a" style="left:107px;top:552px;width:1155px;height:1px;background:#242424"></div>
<div class="a" style="left:7px;top:597px;width:96px;height:1.2px;background:#262626"></div>
<div class="a" style="left:107px;top:597px;width:1155px;height:1px;background:#242424"></div>
<div class="a" style="left:7px;top:641.5px;width:96px;height:1.2px;background:#262626"></div>
<div class="a" style="left:107px;top:641.5px;width:1155px;height:1px;background:#242424"></div>
<div class="a" style="left:97px;top:399px;width:1px;height:262px;background:#222"></div>

<div class="a" style="left:37px;top:402px;width:12px;height:11px;border:1px solid #b8b8b8;background:#2a2a2a"></div>
<div class="t" style="left:38.6px;top:404.2px;font-size:7px;font-weight:bold;color:#c8c8c8;letter-spacing:-0.5px">CC</div>
<svg style="left:57px;top:403px" width="14" height="10" viewBox="0 0 14 10" fill="none" stroke="#d0d0d0" stroke-width="1.1"><path d="M0.9 4.8 Q7 -1.6 13.1 4.8 Q7 11.2 0.9 4.8 Z"/><circle cx="7" cy="4.8" r="1.7" fill="#d8d8d8" stroke="none"/></svg><div class="t" style="left:24.60px;top:435.26px;font-size:10.32px;color:#bdbdbd;transform:scaleX(0.859);transform-origin:0 0;">4.</div>
<svg style="left:36px;top:434.0px" width="14" height="11" viewBox="0 0 14 11" fill="none" stroke="#d0d0d0" stroke-width="1.1"><rect x="0.5" y="0.5" width="13" height="10"/><path d="M0.5 2.5 H13.5 M0.5 8.5 H13.5" stroke-dasharray="1.2 1"/></svg><svg style="left:57px;top:434.5px" width="14" height="10" viewBox="0 0 14 10" fill="none" stroke="#d0d0d0" stroke-width="1.1"><path d="M0.9 4.8 Q7 -1.6 13.1 4.8 Q7 11.2 0.9 4.8 Z"/><circle cx="7" cy="4.8" r="1.7" fill="#d8d8d8" stroke="none"/></svg><svg style="left:78px;top:432.0px" width="12" height="14" viewBox="0 0 12 14" fill="none" stroke="#d0d0d0" stroke-width="1.1"><rect x="1" y="6.5" width="10" height="6.5"/><path d="M3 6.5 V4 A3 3 0 0 1 9 4 V4.5"/><rect x="5.3" y="9" width="1.4" height="1.6" fill="#d0d0d0" stroke="none"/></svg>
<div class="t" style="left:24.60px;top:480.46px;font-size:10.32px;color:#bdbdbd;transform:scaleX(0.859);transform-origin:0 0;">4.</div>
<svg style="left:36px;top:478.7px" width="15" height="12" viewBox="0 0 15 12" fill="none" stroke="#d0d0d0" stroke-width="1.1"><path d="M1 4 H4 L8 0.8 V11.2 L4 8 H1 Z M10 3 L13.5 1.5 M10 6 H14 M10 9 L13.5 10.5"/></svg><svg style="left:57px;top:479.7px" width="14" height="10" viewBox="0 0 14 10" fill="none" stroke="#d0d0d0" stroke-width="1.1"><path d="M0.9 4.8 Q7 -1.6 13.1 4.8 Q7 11.2 0.9 4.8 Z"/><circle cx="7" cy="4.8" r="1.7" fill="#d8d8d8" stroke="none"/></svg><svg style="left:78px;top:477.2px" width="12" height="14" viewBox="0 0 12 14" fill="none" stroke="#d0d0d0" stroke-width="1.1"><rect x="1" y="6.5" width="10" height="6.5"/><path d="M3 6.5 V4 A3 3 0 0 1 9 4 V4.5"/><rect x="5.3" y="9" width="1.4" height="1.6" fill="#d0d0d0" stroke="none"/></svg>
<div class="t" style="left:24.60px;top:525.66px;font-size:10.32px;color:#bdbdbd;transform:scaleX(0.859);transform-origin:0 0;">3.</div>
<svg style="left:36px;top:524.4px" width="14" height="11" viewBox="0 0 14 11" fill="none" stroke="#d0d0d0" stroke-width="1.1"><rect x="0.5" y="0.5" width="13" height="10"/><path d="M0.5 2.5 H13.5 M0.5 8.5 H13.5" stroke-dasharray="1.2 1"/></svg><svg style="left:57px;top:524.9px" width="14" height="10" viewBox="0 0 14 10" fill="none" stroke="#d0d0d0" stroke-width="1.1"><path d="M0.9 4.8 Q7 -1.6 13.1 4.8 Q7 11.2 0.9 4.8 Z"/><circle cx="7" cy="4.8" r="1.7" fill="#d8d8d8" stroke="none"/></svg><svg style="left:78px;top:522.4px" width="12" height="14" viewBox="0 0 12 14" fill="none" stroke="#d0d0d0" stroke-width="1.1"><rect x="1" y="6.5" width="10" height="6.5"/><path d="M3 6.5 V4 A3 3 0 0 1 9 4 V4.5"/><rect x="5.3" y="9" width="1.4" height="1.6" fill="#d0d0d0" stroke="none"/></svg>
<div class="t" style="left:24.60px;top:570.86px;font-size:10.32px;color:#bdbdbd;transform:scaleX(0.859);transform-origin:0 0;">3.</div>
<svg style="left:36px;top:569.1px" width="15" height="12" viewBox="0 0 15 12" fill="none" stroke="#d0d0d0" stroke-width="1.1"><path d="M1 4 H4 L8 0.8 V11.2 L4 8 H1 Z M10 3 L13.5 1.5 M10 6 H14 M10 9 L13.5 10.5"/></svg><svg style="left:57px;top:570.1px" width="14" height="10" viewBox="0 0 14 10" fill="none" stroke="#d0d0d0" stroke-width="1.1"><path d="M0.9 4.8 Q7 -1.6 13.1 4.8 Q7 11.2 0.9 4.8 Z"/><circle cx="7" cy="4.8" r="1.7" fill="#d8d8d8" stroke="none"/></svg><svg style="left:78px;top:567.6px" width="12" height="14" viewBox="0 0 12 14" fill="none" stroke="#d0d0d0" stroke-width="1.1"><rect x="1" y="6.5" width="10" height="6.5"/><path d="M3 6.5 V4 A3 3 0 0 1 9 4 V4.5"/><rect x="5.3" y="9" width="1.4" height="1.6" fill="#d0d0d0" stroke="none"/></svg>
<div class="t" style="left:24.60px;top:616.06px;font-size:10.32px;color:#bdbdbd;transform:scaleX(0.859);transform-origin:0 0;">2.</div>
<svg style="left:36px;top:614.8px" width="14" height="11" viewBox="0 0 14 11" fill="none" stroke="#d0d0d0" stroke-width="1.1"><rect x="0.5" y="0.5" width="13" height="10"/><path d="M0.5 2.5 H13.5 M0.5 8.5 H13.5" stroke-dasharray="1.2 1"/></svg><svg style="left:57px;top:615.3px" width="14" height="10" viewBox="0 0 14 10" fill="none" stroke="#d0d0d0" stroke-width="1.1"><path d="M0.9 4.8 Q7 -1.6 13.1 4.8 Q7 11.2 0.9 4.8 Z"/><circle cx="7" cy="4.8" r="1.7" fill="#d8d8d8" stroke="none"/></svg><svg style="left:78px;top:612.8px" width="12" height="14" viewBox="0 0 12 14" fill="none" stroke="#d0d0d0" stroke-width="1.1"><rect x="1" y="6.5" width="10" height="6.5"/><path d="M3 6.5 V4 A3 3 0 0 1 9 4 V4.5"/><rect x="5.3" y="9" width="1.4" height="1.6" fill="#d0d0d0" stroke="none"/></svg>
<div class="t" style="left:24.60px;top:661.26px;font-size:10.32px;color:#bdbdbd;transform:scaleX(0.859);transform-origin:0 0;">2.</div>
<svg style="left:36px;top:659.5px" width="15" height="12" viewBox="0 0 15 12" fill="none" stroke="#d0d0d0" stroke-width="1.1"><path d="M1 4 H4 L8 0.8 V11.2 L4 8 H1 Z M10 3 L13.5 1.5 M10 6 H14 M10 9 L13.5 10.5"/></svg><svg style="left:57px;top:660.5px" width="14" height="10" viewBox="0 0 14 10" fill="none" stroke="#d0d0d0" stroke-width="1.1"><path d="M0.9 4.8 Q7 -1.6 13.1 4.8 Q7 11.2 0.9 4.8 Z"/><circle cx="7" cy="4.8" r="1.7" fill="#d8d8d8" stroke="none"/></svg><svg style="left:78px;top:658.0px" width="12" height="14" viewBox="0 0 12 14" fill="none" stroke="#d0d0d0" stroke-width="1.1"><rect x="1" y="6.5" width="10" height="6.5"/><path d="M3 6.5 V4 A3 3 0 0 1 9 4 V4.5"/><rect x="5.3" y="9" width="1.4" height="1.6" fill="#d0d0d0" stroke="none"/></svg>
<div class="a" style="left:106px;top:399px;width:1.5px;height:262px;background:#931c26"></div>
<div class="a" style="left:108.5px;top:419px;width:1153.5px;height:87px;background:#5d8fbd;border-radius:2px;border:1px solid #79a8d2"></div>
<div class="a" style="left:109px;top:423.3px;width:1153px;height:1.3px;background:#2f9a5c"></div>
<svg style="left:109px;top:424.8px;overflow:hidden" width="1153" height="31" viewBox="0 0 1153 31">
<defs>
 <linearGradient id="tsky" x1="0" y1="0" x2="0" y2="1"><stop offset="0" stop-color="#e2eef8"/><stop offset="0.46" stop-color="#eaf2f8"/><stop offset="0.48" stop-color="#a8a098"/><stop offset="0.6" stop-color="#b0a89e"/><stop offset="0.62" stop-color="#dfe9f1"/><stop offset="1" stop-color="#d8e4ee"/></linearGradient>
 <linearGradient id="smudge" x1="0" y1="0" x2="1" y2="0"><stop offset="0" stop-color="#8c969e" stop-opacity="0"/><stop offset="0.5" stop-color="#8c969e" stop-opacity=".55"/><stop offset="1" stop-color="#8c969e" stop-opacity="0"/></linearGradient>
 <pattern id="frames" x="6.5" y="0" width="57.2" height="31" patternUnits="userSpaceOnUse">
  <rect width="57.2" height="31" fill="url(#tsky)"/>
  <rect x="42" y="18" width="14" height="13" fill="url(#smudge)"/>
  <path d="M16.5 4 L21.8 4 L25.2 11 L24.6 21 L20.6 21 L20.4 12.5 Z" fill="#b08c70"/>
  <path d="M16.5 0 H24 V6.5 H17 Z" fill="#5d7592"/>
  <path d="M20 19.5 H25 V23 H20 Z" fill="#eef4f8"/>
  <rect x="9" y="24" width="22" height="1.3" fill="#3c4650"/><circle cx="12.5" cy="25.8" r="1.6" fill="#2c3440"/><circle cx="28" cy="25.8" r="1.6" fill="#2c3440"/>
  <path d="M39.5 6.5 V16.5 M42 5.5 V16.5" stroke="#303438" stroke-width="1.6"/>
 </pattern>
</defs>
<rect x="0" y="0" width="1153" height="31" fill="url(#frames)"/>
</svg>
<div class="a" style="left:109px;top:461.5px;width:1153px;height:0;border-top:1px dotted #4f7faa"></div>
<svg style="left:110px;top:465px;overflow:hidden" width="1151" height="40" viewBox="0 0 1151 40" fill="#235283"><rect x="72.0" y="26.7" width="0.9" height="3.3"/><rect x="73.5" y="26.1" width="0.9" height="5.3"/><rect x="75.0" y="24.2" width="0.9" height="5.9"/><rect x="76.5" y="18.7" width="0.9" height="12.4"/><rect x="78.0" y="22.8" width="0.9" height="11.4"/><rect x="79.5" y="13.1" width="0.9" height="21.7"/><rect x="81.0" y="20.9" width="0.9" height="9.8"/><rect x="82.5" y="16.4" width="0.9" height="16.5"/><rect x="84.0" y="21.0" width="0.9" height="10.7"/><rect x="85.5" y="14.6" width="0.9" height="15.5"/><rect x="87.0" y="16.1" width="0.9" height="13.3"/><rect x="88.5" y="18.6" width="0.9" height="10.5"/><rect x="90.0" y="23.7" width="0.9" height="5.7"/><rect x="91.5" y="16.5" width="0.9" height="13.2"/><rect x="93.0" y="14.4" width="0.9" height="16.0"/><rect x="94.5" y="19.8" width="0.9" height="9.5"/><rect x="96.0" y="21.6" width="0.9" height="8.3"/><rect x="97.5" y="14.8" width="0.9" height="14.9"/><rect x="99.0" y="17.0" width="0.9" height="12.1"/><rect x="100.5" y="17.0" width="0.9" height="13.2"/><rect x="102.0" y="16.2" width="0.9" height="13.1"/><rect x="103.5" y="15.8" width="0.9" height="14.4"/><rect x="105.0" y="14.2" width="0.9" height="15.4"/><rect x="106.5" y="14.4" width="0.9" height="14.9"/><rect x="108.0" y="22.4" width="0.9" height="7.9"/><rect x="109.5" y="15.4" width="0.9" height="14.8"/><rect x="111.0" y="13.4" width="0.9" height="16.2"/><rect x="112.5" y="17.1" width="0.9" height="11.9"/><rect x="114.0" y="11.4" width="0.9" height="18.5"/><rect x="115.5" y="10.4" width="0.9" height="20.2"/><rect x="117.0" y="10.4" width="0.9" height="20.1"/><rect x="118.5" y="15.6" width="0.9" height="17.2"/><rect x="120.0" y="13.7" width="0.9" height="17.0"/><rect x="121.5" y="3.0" width="0.9" height="30.5"/><rect x="123.0" y="2.9" width="0.9" height="30.5"/><rect x="124.5" y="1.8" width="0.9" height="32.3"/><rect x="126.0" y="12.2" width="0.9" height="20.6"/><rect x="127.5" y="18.6" width="0.9" height="15.3"/><rect x="129.0" y="17.8" width="0.9" height="14.4"/><rect x="130.5" y="14.8" width="0.9" height="15.2"/><rect x="132.0" y="15.3" width="0.9" height="13.9"/><rect x="133.5" y="16.9" width="0.9" height="12.5"/><rect x="135.0" y="15.3" width="0.9" height="14.6"/><rect x="136.5" y="15.7" width="0.9" height="14.0"/><rect x="138.0" y="17.3" width="0.9" height="12.5"/><rect x="139.5" y="16.6" width="0.9" height="13.2"/><rect x="141.0" y="18.7" width="0.9" height="11.4"/><rect x="142.5" y="15.0" width="0.9" height="14.3"/><rect x="144.0" y="17.9" width="0.9" height="12.4"/><rect x="145.5" y="22.4" width="0.9" height="7.3"/><rect x="147.0" y="23.2" width="0.9" height="5.9"/><rect x="148.5" y="16.9" width="0.9" height="13.5"/><rect x="150.0" y="22.1" width="0.9" height="7.9"/><rect x="151.5" y="22.3" width="0.9" height="8.2"/><rect x="153.0" y="21.3" width="0.9" height="8.3"/><rect x="154.5" y="18.4" width="0.9" height="11.9"/><rect x="156.0" y="21.8" width="0.9" height="8.0"/><rect x="157.5" y="19.6" width="0.9" height="9.9"/><rect x="159.0" y="15.3" width="0.9" height="14.6"/><rect x="160.5" y="17.5" width="0.9" height="12.1"/><rect x="162.0" y="12.9" width="0.9" height="16.6"/><rect x="163.5" y="5.4" width="0.9" height="28.4"/><rect x="165.0" y="18.2" width="0.9" height="11.7"/><rect x="166.5" y="6.3" width="0.9" height="24.5"/><rect x="168.0" y="5.7" width="0.9" height="30.7"/><rect x="169.5" y="14.4" width="0.9" height="22.9"/><rect x="171.0" y="5.8" width="0.9" height="24.8"/><rect x="172.5" y="16.3" width="0.9" height="16.2"/><rect x="174.0" y="16.4" width="0.9" height="16.3"/><rect x="175.5" y="11.7" width="0.9" height="20.6"/><rect x="177.0" y="20.4" width="0.9" height="9.4"/><rect x="178.5" y="18.4" width="0.9" height="12.1"/><rect x="180.0" y="20.3" width="0.9" height="9.5"/><rect x="181.5" y="20.9" width="0.9" height="8.3"/><rect x="183.0" y="23.4" width="0.9" height="6.0"/><rect x="184.5" y="20.4" width="0.9" height="9.1"/><rect x="186.0" y="18.4" width="0.9" height="11.1"/><rect x="187.5" y="24.1" width="0.9" height="5.0"/><rect x="189.0" y="16.3" width="0.9" height="13.0"/><rect x="190.5" y="18.7" width="0.9" height="10.4"/><rect x="192.0" y="15.6" width="0.9" height="14.2"/><rect x="193.5" y="15.4" width="0.9" height="14.3"/><rect x="195.0" y="16.7" width="0.9" height="12.8"/><rect x="196.5" y="15.4" width="0.9" height="14.5"/><rect x="198.0" y="19.4" width="0.9" height="9.7"/><rect x="199.5" y="22.4" width="0.9" height="7.7"/><rect x="201.0" y="20.9" width="0.9" height="8.3"/><rect x="202.5" y="14.7" width="0.9" height="15.3"/><rect x="204.0" y="20.1" width="0.9" height="9.4"/><rect x="205.5" y="17.6" width="0.9" height="12.1"/><rect x="207.0" y="17.3" width="0.9" height="13.4"/><rect x="208.5" y="14.1" width="0.9" height="18.6"/><rect x="210.0" y="15.2" width="0.9" height="14.4"/><rect x="211.5" y="11.8" width="0.9" height="21.1"/><rect x="213.0" y="13.3" width="0.9" height="16.6"/><rect x="214.5" y="14.8" width="0.9" height="18.4"/><rect x="216.0" y="20.0" width="0.9" height="12.3"/><rect x="217.5" y="12.5" width="0.9" height="21.1"/><rect x="219.0" y="6.2" width="0.9" height="27.7"/><rect x="220.5" y="8.3" width="0.9" height="22.6"/><rect x="222.0" y="10.0" width="0.9" height="21.5"/><rect x="223.5" y="15.2" width="0.9" height="15.2"/><rect x="225.0" y="13.0" width="0.9" height="17.1"/><rect x="226.5" y="14.9" width="0.9" height="14.9"/><rect x="228.0" y="18.0" width="0.9" height="12.2"/><rect x="229.5" y="15.3" width="0.9" height="15.1"/><rect x="231.0" y="16.7" width="0.9" height="12.7"/><rect x="232.5" y="23.8" width="0.9" height="5.7"/><rect x="234.0" y="22.8" width="0.9" height="7.1"/><rect x="235.5" y="17.3" width="0.9" height="12.8"/><rect x="237.0" y="18.6" width="0.9" height="11.6"/><rect x="238.5" y="16.2" width="0.9" height="13.6"/><rect x="240.0" y="17.0" width="0.9" height="13.1"/><rect x="241.5" y="21.0" width="0.9" height="8.4"/><rect x="243.0" y="16.3" width="0.9" height="13.8"/><rect x="244.5" y="14.2" width="0.9" height="15.4"/><rect x="246.0" y="18.5" width="0.9" height="11.6"/><rect x="247.5" y="17.1" width="0.9" height="12.1"/><rect x="249.0" y="21.9" width="0.9" height="8.3"/><rect x="250.5" y="19.4" width="0.9" height="9.7"/><rect x="252.0" y="22.3" width="0.9" height="7.9"/><rect x="253.5" y="12.4" width="0.9" height="17.2"/><rect x="255.0" y="13.1" width="0.9" height="18.2"/><rect x="256.5" y="15.0" width="0.9" height="15.7"/><rect x="258.0" y="-0.3" width="0.9" height="30.2"/><rect x="259.5" y="6.2" width="0.9" height="31.2"/><rect x="261.0" y="10.1" width="0.9" height="21.6"/><rect x="262.5" y="3.6" width="0.9" height="30.8"/><rect x="264.0" y="15.1" width="0.9" height="21.1"/><rect x="265.5" y="15.2" width="0.9" height="17.2"/><rect x="267.0" y="7.8" width="0.9" height="22.6"/><rect x="268.5" y="10.6" width="0.9" height="18.4"/><rect x="270.0" y="23.0" width="0.9" height="6.7"/><rect x="271.5" y="19.8" width="0.9" height="9.8"/><rect x="273.0" y="19.7" width="0.9" height="9.3"/><rect x="274.5" y="15.8" width="0.9" height="13.4"/><rect x="276.0" y="14.5" width="0.9" height="15.9"/><rect x="277.5" y="20.6" width="0.9" height="9.0"/><rect x="279.0" y="14.0" width="0.9" height="15.6"/><rect x="280.5" y="19.2" width="0.9" height="9.9"/><rect x="282.0" y="22.8" width="0.9" height="6.6"/><rect x="283.5" y="14.5" width="0.9" height="14.9"/><rect x="285.0" y="18.4" width="0.9" height="11.2"/><rect x="286.5" y="14.4" width="0.9" height="15.9"/><rect x="288.0" y="17.2" width="0.9" height="13.2"/><rect x="289.5" y="18.0" width="0.9" height="11.1"/><rect x="291.0" y="16.3" width="0.9" height="13.9"/><rect x="292.5" y="17.0" width="0.9" height="12.1"/><rect x="294.0" y="14.3" width="0.9" height="15.4"/><rect x="295.5" y="19.5" width="0.9" height="10.7"/><rect x="297.0" y="12.6" width="0.9" height="17.4"/><rect x="298.5" y="18.2" width="0.9" height="11.5"/><rect x="300.0" y="19.8" width="0.9" height="10.2"/><rect x="301.5" y="7.5" width="0.9" height="22.9"/><rect x="303.0" y="2.2" width="0.9" height="30.1"/><rect x="304.5" y="17.1" width="0.9" height="13.5"/><rect x="306.0" y="13.5" width="0.9" height="18.4"/><rect x="307.5" y="11.1" width="0.9" height="26.0"/><rect x="309.0" y="5.2" width="0.9" height="27.7"/><rect x="310.5" y="10.3" width="0.9" height="21.6"/><rect x="312.0" y="19.8" width="0.9" height="14.5"/><rect x="313.5" y="19.0" width="0.9" height="12.6"/><rect x="315.0" y="12.2" width="0.9" height="17.3"/><rect x="316.5" y="19.7" width="0.9" height="10.0"/><rect x="318.0" y="13.0" width="0.9" height="17.4"/><rect x="319.5" y="23.9" width="0.9" height="6.2"/><rect x="321.0" y="14.6" width="0.9" height="15.2"/><rect x="322.5" y="24.4" width="0.9" height="6.0"/><rect x="324.0" y="15.4" width="0.9" height="15.0"/><rect x="325.5" y="21.0" width="0.9" height="8.2"/><rect x="327.0" y="18.3" width="0.9" height="12.2"/><rect x="328.5" y="16.4" width="0.9" height="13.7"/><rect x="330.0" y="18.9" width="0.9" height="10.2"/><rect x="331.5" y="15.9" width="0.9" height="14.5"/><rect x="333.0" y="17.1" width="0.9" height="12.1"/><rect x="334.5" y="21.0" width="0.9" height="9.0"/><rect x="336.0" y="22.7" width="0.9" height="7.1"/><rect x="337.5" y="17.6" width="0.9" height="11.7"/><rect x="339.0" y="17.4" width="0.9" height="12.1"/><rect x="340.5" y="18.3" width="0.9" height="11.7"/><rect x="342.0" y="13.9" width="0.9" height="15.5"/><rect x="343.5" y="19.0" width="0.9" height="11.2"/><rect x="345.0" y="18.8" width="0.9" height="11.1"/><rect x="346.5" y="12.0" width="0.9" height="18.3"/><rect x="348.0" y="7.6" width="0.9" height="23.1"/><rect x="349.5" y="19.0" width="0.9" height="13.4"/><rect x="351.0" y="7.8" width="0.9" height="28.0"/><rect x="352.5" y="3.8" width="0.9" height="27.8"/><rect x="354.0" y="2.2" width="0.9" height="34.2"/><rect x="355.5" y="15.1" width="0.9" height="20.1"/><rect x="357.0" y="11.0" width="0.9" height="21.6"/><rect x="358.5" y="18.2" width="0.9" height="13.2"/><rect x="360.0" y="11.2" width="0.9" height="18.6"/><rect x="361.5" y="17.7" width="0.9" height="13.0"/><rect x="363.0" y="21.7" width="0.9" height="7.4"/><rect x="364.5" y="18.6" width="0.9" height="11.8"/><rect x="366.0" y="15.8" width="0.9" height="14.6"/><rect x="367.5" y="20.1" width="0.9" height="10.3"/><rect x="369.0" y="16.1" width="0.9" height="13.9"/><rect x="370.5" y="19.7" width="0.9" height="9.8"/><rect x="372.0" y="22.0" width="0.9" height="7.5"/><rect x="373.5" y="19.9" width="0.9" height="9.2"/><rect x="375.0" y="14.3" width="0.9" height="15.2"/><rect x="376.5" y="15.5" width="0.9" height="14.1"/><rect x="378.0" y="23.6" width="0.9" height="6.0"/><rect x="379.5" y="14.7" width="0.9" height="14.9"/><rect x="381.0" y="14.9" width="0.9" height="14.8"/><rect x="382.5" y="15.6" width="0.9" height="13.5"/><rect x="384.0" y="23.7" width="0.9" height="6.6"/><rect x="385.5" y="20.7" width="0.9" height="9.7"/><rect x="387.0" y="19.6" width="0.9" height="10.8"/><rect x="388.5" y="16.3" width="0.9" height="13.8"/><rect x="390.0" y="18.8" width="0.9" height="10.2"/><rect x="391.5" y="11.1" width="0.9" height="19.1"/><rect x="393.0" y="9.7" width="0.9" height="20.6"/><rect x="394.5" y="9.1" width="0.9" height="25.6"/><rect x="396.0" y="12.7" width="0.9" height="20.0"/><rect x="397.5" y="4.8" width="0.9" height="26.6"/><rect x="399.0" y="0.9" width="0.9" height="35.7"/><rect x="400.5" y="3.0" width="0.9" height="29.4"/><rect x="402.0" y="13.0" width="0.9" height="22.0"/><rect x="403.5" y="19.5" width="0.9" height="14.2"/><rect x="405.0" y="18.3" width="0.9" height="11.3"/><rect x="406.5" y="14.8" width="0.9" height="16.0"/><rect x="408.0" y="11.7" width="0.9" height="17.8"/><rect x="409.5" y="22.6" width="0.9" height="7.2"/><rect x="411.0" y="15.9" width="0.9" height="13.5"/><rect x="412.5" y="19.0" width="0.9" height="11.0"/><rect x="414.0" y="16.0" width="0.9" height="14.0"/><rect x="415.5" y="22.5" width="0.9" height="6.9"/><rect x="417.0" y="17.8" width="0.9" height="12.3"/><rect x="418.5" y="21.6" width="0.9" height="7.8"/><rect x="420.0" y="22.2" width="0.9" height="7.7"/><rect x="421.5" y="20.2" width="0.9" height="10.3"/><rect x="423.0" y="18.4" width="0.9" height="11.8"/><rect x="424.5" y="17.0" width="0.9" height="12.1"/><rect x="426.0" y="18.7" width="0.9" height="11.6"/><rect x="427.5" y="14.7" width="0.9" height="14.7"/><rect x="429.0" y="22.6" width="0.9" height="7.9"/><rect x="430.5" y="17.5" width="0.9" height="12.1"/><rect x="432.0" y="14.7" width="0.9" height="14.7"/><rect x="433.5" y="14.8" width="0.9" height="14.3"/><rect x="435.0" y="15.9" width="0.9" height="13.4"/><rect x="436.5" y="18.1" width="0.9" height="11.2"/><rect x="438.0" y="17.3" width="0.9" height="14.0"/><rect x="439.5" y="18.8" width="0.9" height="12.1"/><rect x="441.0" y="9.9" width="0.9" height="21.7"/><rect x="442.5" y="11.6" width="0.9" height="22.1"/><rect x="444.0" y="18.9" width="0.9" height="14.2"/><rect x="445.5" y="5.6" width="0.9" height="25.1"/><rect x="447.0" y="12.6" width="0.9" height="20.3"/><rect x="448.5" y="14.4" width="0.9" height="21.3"/><rect x="450.0" y="14.2" width="0.9" height="17.1"/><rect x="451.5" y="13.6" width="0.9" height="19.2"/><rect x="453.0" y="17.7" width="0.9" height="12.5"/><rect x="454.5" y="20.8" width="0.9" height="9.7"/><rect x="456.0" y="18.1" width="0.9" height="11.5"/><rect x="457.5" y="14.5" width="0.9" height="14.8"/><rect x="459.0" y="24.0" width="0.9" height="6.0"/><rect x="460.5" y="14.7" width="0.9" height="15.2"/><rect x="462.0" y="19.7" width="0.9" height="9.5"/><rect x="463.5" y="20.7" width="0.9" height="9.7"/><rect x="465.0" y="22.7" width="0.9" height="7.5"/><rect x="466.5" y="14.3" width="0.9" height="14.9"/><rect x="468.0" y="14.5" width="0.9" height="15.2"/><rect x="469.5" y="23.5" width="0.9" height="6.1"/><rect x="471.0" y="14.8" width="0.9" height="15.4"/><rect x="472.5" y="22.1" width="0.9" height="7.3"/><rect x="474.0" y="19.4" width="0.9" height="10.9"/><rect x="475.5" y="21.8" width="0.9" height="7.8"/><rect x="477.0" y="18.1" width="0.9" height="11.1"/><rect x="478.5" y="20.6" width="0.9" height="9.8"/><rect x="480.0" y="23.0" width="0.9" height="7.2"/><rect x="481.5" y="22.1" width="0.9" height="7.1"/><rect x="483.0" y="14.3" width="0.9" height="15.8"/><rect x="484.5" y="16.6" width="0.9" height="14.8"/><rect x="486.0" y="12.1" width="0.9" height="19.6"/><rect x="487.5" y="13.8" width="0.9" height="19.9"/><rect x="489.0" y="10.4" width="0.9" height="25.1"/><rect x="490.5" y="3.6" width="0.9" height="27.9"/><rect x="492.0" y="11.2" width="0.9" height="19.8"/><rect x="493.5" y="12.7" width="0.9" height="20.3"/><rect x="495.0" y="13.0" width="0.9" height="20.4"/><rect x="496.5" y="17.8" width="0.9" height="15.1"/><rect x="498.0" y="15.6" width="0.9" height="15.3"/><rect x="499.5" y="16.5" width="0.9" height="12.7"/><rect x="501.0" y="13.0" width="0.9" height="17.2"/><rect x="502.5" y="14.9" width="0.9" height="15.7"/><rect x="504.0" y="18.1" width="0.9" height="12.3"/><rect x="505.5" y="21.9" width="0.9" height="8.5"/><rect x="507.0" y="23.3" width="0.9" height="6.9"/><rect x="508.5" y="22.1" width="0.9" height="7.3"/><rect x="510.0" y="15.6" width="0.9" height="14.2"/><rect x="511.5" y="14.7" width="0.9" height="14.7"/><rect x="513.0" y="18.4" width="0.9" height="10.6"/><rect x="514.5" y="21.8" width="0.9" height="8.6"/><rect x="516.0" y="16.8" width="0.9" height="12.5"/><rect x="517.5" y="15.8" width="0.9" height="14.0"/><rect x="519.0" y="17.2" width="0.9" height="13.1"/><rect x="520.5" y="17.9" width="0.9" height="12.4"/><rect x="522.0" y="22.7" width="0.9" height="7.3"/><rect x="523.5" y="19.2" width="0.9" height="10.2"/><rect x="525.0" y="13.3" width="0.9" height="16.3"/><rect x="526.5" y="14.7" width="0.9" height="14.5"/><rect x="528.0" y="14.5" width="0.9" height="15.9"/><rect x="529.5" y="17.7" width="0.9" height="13.1"/><rect x="531.0" y="11.5" width="0.9" height="19.2"/><rect x="532.5" y="22.2" width="0.9" height="8.2"/><rect x="534.0" y="8.0" width="0.9" height="25.2"/><rect x="535.5" y="4.9" width="0.9" height="26.8"/><rect x="537.0" y="8.9" width="0.9" height="21.1"/><rect x="538.5" y="13.3" width="0.9" height="19.4"/><rect x="540.0" y="13.2" width="0.9" height="20.6"/><rect x="541.5" y="15.0" width="0.9" height="17.2"/><rect x="543.0" y="16.7" width="0.9" height="13.7"/><rect x="544.5" y="20.5" width="0.9" height="9.6"/><rect x="546.0" y="12.1" width="0.9" height="17.6"/><rect x="547.5" y="20.3" width="0.9" height="9.7"/><rect x="549.0" y="17.3" width="0.9" height="12.7"/><rect x="550.5" y="18.7" width="0.9" height="11.4"/><rect x="552.0" y="20.9" width="0.9" height="8.1"/><rect x="553.5" y="18.1" width="0.9" height="11.2"/><rect x="555.0" y="23.4" width="0.9" height="5.6"/><rect x="556.5" y="18.0" width="0.9" height="11.2"/><rect x="558.0" y="21.6" width="0.9" height="8.2"/><rect x="559.5" y="17.1" width="0.9" height="12.1"/><rect x="561.0" y="20.4" width="0.9" height="8.7"/><rect x="562.5" y="14.9" width="0.9" height="15.1"/><rect x="564.0" y="24.3" width="0.9" height="5.8"/><rect x="565.5" y="18.8" width="0.9" height="10.9"/><rect x="567.0" y="21.3" width="0.9" height="8.1"/><rect x="568.5" y="23.6" width="0.9" height="6.5"/><rect x="570.0" y="16.2" width="0.9" height="13.9"/><rect x="571.5" y="20.2" width="0.9" height="9.5"/><rect x="573.0" y="14.1" width="0.9" height="15.3"/><rect x="574.5" y="13.6" width="0.9" height="15.8"/><rect x="576.0" y="11.5" width="0.9" height="18.6"/><rect x="577.5" y="15.2" width="0.9" height="18.4"/><rect x="579.0" y="8.1" width="0.9" height="26.7"/><rect x="580.5" y="13.3" width="0.9" height="22.9"/><rect x="582.0" y="4.1" width="0.9" height="31.1"/><rect x="583.5" y="0.6" width="0.9" height="36.1"/><rect x="585.0" y="2.7" width="0.9" height="30.4"/><rect x="586.5" y="6.3" width="0.9" height="25.4"/><rect x="588.0" y="15.5" width="0.9" height="14.5"/><rect x="589.5" y="10.3" width="0.9" height="19.3"/><rect x="591.0" y="19.6" width="0.9" height="10.0"/><rect x="592.5" y="21.6" width="0.9" height="7.5"/><rect x="594.0" y="15.5" width="0.9" height="14.6"/><rect x="595.5" y="15.9" width="0.9" height="14.0"/><rect x="597.0" y="19.6" width="0.9" height="10.6"/><rect x="598.5" y="14.9" width="0.9" height="15.5"/><rect x="600.0" y="14.7" width="0.9" height="14.5"/><rect x="601.5" y="21.5" width="0.9" height="7.5"/><rect x="603.0" y="15.3" width="0.9" height="14.7"/><rect x="604.5" y="15.5" width="0.9" height="13.9"/><rect x="606.0" y="22.8" width="0.9" height="7.3"/><rect x="607.5" y="21.5" width="0.9" height="8.1"/><rect x="609.0" y="24.0" width="0.9" height="5.4"/><rect x="610.5" y="16.5" width="0.9" height="13.0"/><rect x="612.0" y="14.3" width="0.9" height="16.0"/><rect x="613.5" y="17.3" width="0.9" height="12.3"/><rect x="615.0" y="18.9" width="0.9" height="10.7"/><rect x="616.5" y="16.0" width="0.9" height="13.3"/><rect x="618.0" y="14.3" width="0.9" height="16.0"/><rect x="619.5" y="21.2" width="0.9" height="8.1"/><rect x="621.0" y="11.6" width="0.9" height="17.4"/><rect x="622.5" y="14.0" width="0.9" height="18.2"/><rect x="624.0" y="16.5" width="0.9" height="14.7"/><rect x="625.5" y="6.8" width="0.9" height="28.9"/><rect x="627.0" y="14.0" width="0.9" height="21.1"/><rect x="628.5" y="10.6" width="0.9" height="24.4"/><rect x="630.0" y="13.1" width="0.9" height="22.4"/><rect x="631.5" y="3.7" width="0.9" height="28.7"/><rect x="633.0" y="12.6" width="0.9" height="22.3"/><rect x="634.5" y="17.0" width="0.9" height="12.6"/><rect x="636.0" y="18.9" width="0.9" height="13.1"/><rect x="637.5" y="16.2" width="0.9" height="14.4"/><rect x="639.0" y="20.1" width="0.9" height="9.8"/><rect x="640.5" y="15.1" width="0.9" height="14.9"/><rect x="642.0" y="19.7" width="0.9" height="9.5"/><rect x="643.5" y="15.1" width="0.9" height="15.0"/><rect x="645.0" y="21.9" width="0.9" height="8.2"/><rect x="646.5" y="17.7" width="0.9" height="12.0"/><rect x="648.0" y="15.0" width="0.9" height="14.3"/><rect x="649.5" y="20.5" width="0.9" height="9.8"/><rect x="651.0" y="22.1" width="0.9" height="7.2"/><rect x="652.5" y="20.2" width="0.9" height="9.0"/><rect x="654.0" y="20.2" width="0.9" height="10.3"/><rect x="655.5" y="16.3" width="0.9" height="14.1"/><rect x="657.0" y="22.8" width="0.9" height="7.7"/><rect x="658.5" y="15.7" width="0.9" height="13.9"/><rect x="660.0" y="21.5" width="0.9" height="7.6"/><rect x="661.5" y="21.3" width="0.9" height="7.7"/><rect x="663.0" y="18.8" width="0.9" height="11.3"/><rect x="664.5" y="17.2" width="0.9" height="12.6"/><rect x="666.0" y="20.5" width="0.9" height="9.2"/><rect x="667.5" y="11.2" width="0.9" height="18.5"/><rect x="669.0" y="11.3" width="0.9" height="19.8"/><rect x="670.5" y="14.0" width="0.9" height="20.3"/><rect x="672.0" y="4.0" width="0.9" height="31.5"/><rect x="673.5" y="4.1" width="0.9" height="29.3"/><rect x="675.0" y="9.6" width="0.9" height="21.2"/><rect x="676.5" y="7.1" width="0.9" height="28.3"/><rect x="678.0" y="9.1" width="0.9" height="23.6"/><rect x="679.5" y="11.2" width="0.9" height="20.7"/><rect x="681.0" y="9.4" width="0.9" height="20.8"/><rect x="682.5" y="12.5" width="0.9" height="17.2"/><rect x="684.0" y="15.7" width="0.9" height="13.3"/><rect x="685.5" y="17.1" width="0.9" height="13.1"/><rect x="687.0" y="13.8" width="0.9" height="15.4"/><rect x="688.5" y="17.5" width="0.9" height="12.6"/><rect x="690.0" y="18.2" width="0.9" height="12.0"/><rect x="691.5" y="18.2" width="0.9" height="12.2"/><rect x="693.0" y="21.5" width="0.9" height="8.1"/><rect x="694.5" y="16.0" width="0.9" height="14.4"/><rect x="696.0" y="19.9" width="0.9" height="9.5"/><rect x="697.5" y="19.5" width="0.9" height="10.2"/><rect x="699.0" y="19.2" width="0.9" height="10.3"/><rect x="700.5" y="20.9" width="0.9" height="9.2"/><rect x="702.0" y="14.5" width="0.9" height="14.8"/><rect x="703.5" y="15.7" width="0.9" height="13.6"/><rect x="705.0" y="22.4" width="0.9" height="7.8"/><rect x="706.5" y="17.0" width="0.9" height="12.8"/><rect x="708.0" y="20.9" width="0.9" height="8.6"/><rect x="709.5" y="16.2" width="0.9" height="14.1"/><rect x="711.0" y="17.6" width="0.9" height="12.3"/><rect x="712.5" y="20.0" width="0.9" height="9.6"/><rect x="714.0" y="11.1" width="0.9" height="19.4"/><rect x="715.5" y="16.3" width="0.9" height="14.1"/><rect x="717.0" y="18.0" width="0.9" height="13.3"/><rect x="718.5" y="14.3" width="0.9" height="18.9"/><rect x="720.0" y="7.8" width="0.9" height="27.4"/><rect x="721.5" y="6.4" width="0.9" height="30.4"/><rect x="723.0" y="13.9" width="0.9" height="22.7"/><rect x="724.5" y="8.2" width="0.9" height="26.8"/><rect x="726.0" y="12.4" width="0.9" height="17.2"/><rect x="727.5" y="8.1" width="0.9" height="22.2"/><rect x="729.0" y="21.4" width="0.9" height="8.0"/><rect x="730.5" y="14.1" width="0.9" height="15.1"/><rect x="732.0" y="13.5" width="0.9" height="15.8"/><rect x="733.5" y="14.3" width="0.9" height="15.9"/><rect x="735.0" y="16.6" width="0.9" height="13.6"/><rect x="736.5" y="15.3" width="0.9" height="14.7"/><rect x="738.0" y="18.1" width="0.9" height="11.5"/><rect x="739.5" y="15.0" width="0.9" height="14.4"/><rect x="741.0" y="21.2" width="0.9" height="8.5"/><rect x="742.5" y="23.4" width="0.9" height="5.8"/><rect x="744.0" y="18.6" width="0.9" height="11.3"/><rect x="745.5" y="15.2" width="0.9" height="15.1"/><rect x="747.0" y="18.8" width="0.9" height="11.2"/><rect x="748.5" y="15.4" width="0.9" height="14.3"/><rect x="750.0" y="14.3" width="0.9" height="15.7"/><rect x="751.5" y="17.1" width="0.9" height="12.8"/><rect x="753.0" y="16.5" width="0.9" height="13.0"/><rect x="754.5" y="13.6" width="0.9" height="16.2"/><rect x="756.0" y="14.0" width="0.9" height="16.1"/><rect x="757.5" y="15.6" width="0.9" height="14.8"/><rect x="759.0" y="17.1" width="0.9" height="12.8"/><rect x="760.5" y="11.6" width="0.9" height="19.3"/><rect x="762.0" y="12.7" width="0.9" height="20.9"/><rect x="763.5" y="11.0" width="0.9" height="21.3"/><rect x="765.0" y="9.9" width="0.9" height="23.7"/><rect x="766.5" y="-0.8" width="0.9" height="37.1"/><rect x="768.0" y="11.9" width="0.9" height="20.4"/><rect x="769.5" y="6.5" width="0.9" height="28.9"/><rect x="771.0" y="17.0" width="0.9" height="17.9"/><rect x="772.5" y="13.9" width="0.9" height="17.0"/><rect x="774.0" y="22.6" width="0.9" height="9.5"/><rect x="775.5" y="14.5" width="0.9" height="15.9"/><rect x="777.0" y="12.9" width="0.9" height="17.1"/><rect x="778.5" y="16.4" width="0.9" height="13.6"/><rect x="780.0" y="16.5" width="0.9" height="13.6"/><rect x="781.5" y="18.7" width="0.9" height="10.5"/><rect x="783.0" y="21.8" width="0.9" height="8.4"/><rect x="784.5" y="14.7" width="0.9" height="14.9"/><rect x="786.0" y="15.5" width="0.9" height="14.3"/><rect x="787.5" y="20.9" width="0.9" height="8.7"/><rect x="789.0" y="20.3" width="0.9" height="9.7"/><rect x="790.5" y="14.6" width="0.9" height="15.3"/><rect x="792.0" y="23.7" width="0.9" height="6.5"/><rect x="793.5" y="17.7" width="0.9" height="11.9"/><rect x="795.0" y="24.1" width="0.9" height="5.7"/><rect x="796.5" y="14.5" width="0.9" height="15.3"/><rect x="798.0" y="19.3" width="0.9" height="10.7"/><rect x="799.5" y="21.3" width="0.9" height="7.7"/><rect x="801.0" y="23.9" width="0.9" height="5.3"/><rect x="802.5" y="13.2" width="0.9" height="17.2"/><rect x="804.0" y="21.6" width="0.9" height="8.6"/><rect x="805.5" y="17.6" width="0.9" height="11.7"/><rect x="807.0" y="18.8" width="0.9" height="13.4"/><rect x="808.5" y="5.3" width="0.9" height="24.8"/><rect x="810.0" y="6.0" width="0.9" height="26.9"/><rect x="811.5" y="3.4" width="0.9" height="33.9"/><rect x="813.0" y="8.0" width="0.9" height="22.1"/><rect x="814.5" y="3.2" width="0.9" height="27.4"/><rect x="816.0" y="10.7" width="0.9" height="20.2"/><rect x="817.5" y="6.5" width="0.9" height="23.5"/><rect x="819.0" y="14.6" width="0.9" height="16.5"/><rect x="820.5" y="13.9" width="0.9" height="16.6"/><rect x="822.0" y="17.7" width="0.9" height="12.4"/><rect x="823.5" y="18.3" width="0.9" height="12.0"/><rect x="825.0" y="13.6" width="0.9" height="16.3"/><rect x="826.5" y="20.4" width="0.9" height="10.1"/><rect x="828.0" y="16.4" width="0.9" height="13.1"/><rect x="829.5" y="17.4" width="0.9" height="12.8"/><rect x="831.0" y="17.5" width="0.9" height="12.1"/><rect x="832.5" y="14.9" width="0.9" height="15.1"/><rect x="834.0" y="17.5" width="0.9" height="12.7"/><rect x="835.5" y="20.7" width="0.9" height="8.7"/><rect x="837.0" y="19.2" width="0.9" height="11.0"/><rect x="838.5" y="15.0" width="0.9" height="15.3"/><rect x="840.0" y="15.6" width="0.9" height="14.3"/><rect x="841.5" y="20.8" width="0.9" height="9.5"/><rect x="843.0" y="16.7" width="0.9" height="12.9"/><rect x="844.5" y="22.9" width="0.9" height="7.3"/><rect x="846.0" y="21.3" width="0.9" height="9.2"/><rect x="847.5" y="20.5" width="0.9" height="9.5"/><rect x="849.0" y="17.7" width="0.9" height="11.7"/><rect x="850.5" y="12.7" width="0.9" height="17.1"/><rect x="852.0" y="19.2" width="0.9" height="12.5"/><rect x="853.5" y="15.9" width="0.9" height="17.5"/><rect x="855.0" y="5.2" width="0.9" height="27.3"/><rect x="856.5" y="9.6" width="0.9" height="21.6"/><rect x="858.0" y="11.6" width="0.9" height="21.2"/><rect x="859.5" y="7.3" width="0.9" height="26.9"/><rect x="861.0" y="17.7" width="0.9" height="19.6"/><rect x="862.5" y="14.2" width="0.9" height="19.5"/><rect x="864.0" y="9.8" width="0.9" height="22.7"/><rect x="865.5" y="15.7" width="0.9" height="13.8"/><rect x="867.0" y="20.7" width="0.9" height="9.8"/><rect x="868.5" y="16.8" width="0.9" height="12.7"/><rect x="870.0" y="14.9" width="0.9" height="15.6"/><rect x="871.5" y="15.4" width="0.9" height="15.1"/><rect x="873.0" y="20.9" width="0.9" height="8.4"/><rect x="874.5" y="21.8" width="0.9" height="7.3"/><rect x="876.0" y="17.9" width="0.9" height="11.8"/><rect x="877.5" y="14.4" width="0.9" height="14.7"/><rect x="879.0" y="17.5" width="0.9" height="11.6"/><rect x="880.5" y="14.3" width="0.9" height="15.5"/><rect x="882.0" y="17.1" width="0.9" height="12.9"/><rect x="883.5" y="19.5" width="0.9" height="9.7"/><rect x="885.0" y="14.3" width="0.9" height="15.0"/><rect x="886.5" y="23.7" width="0.9" height="5.8"/><rect x="888.0" y="14.8" width="0.9" height="15.5"/><rect x="889.5" y="23.5" width="0.9" height="6.6"/><rect x="891.0" y="16.8" width="0.9" height="12.3"/><rect x="892.5" y="21.8" width="0.9" height="8.6"/><rect x="894.0" y="15.9" width="0.9" height="14.0"/><rect x="895.5" y="14.6" width="0.9" height="14.9"/><rect x="897.0" y="19.2" width="0.9" height="10.6"/><rect x="898.5" y="19.2" width="0.9" height="10.7"/><rect x="900.0" y="11.9" width="0.9" height="21.2"/><rect x="901.5" y="17.6" width="0.9" height="17.9"/><rect x="903.0" y="9.8" width="0.9" height="26.5"/><rect x="904.5" y="4.5" width="0.9" height="29.0"/><rect x="906.0" y="11.6" width="0.9" height="25.0"/><rect x="907.5" y="7.2" width="0.9" height="25.1"/><rect x="909.0" y="6.3" width="0.9" height="27.1"/><rect x="910.5" y="18.9" width="0.9" height="10.9"/><rect x="912.0" y="11.8" width="0.9" height="18.0"/><rect x="913.5" y="12.5" width="0.9" height="17.2"/><rect x="915.0" y="21.3" width="0.9" height="9.1"/><rect x="916.5" y="19.6" width="0.9" height="10.1"/><rect x="918.0" y="19.9" width="0.9" height="9.3"/><rect x="919.5" y="14.0" width="0.9" height="16.3"/><rect x="921.0" y="16.8" width="0.9" height="12.9"/><rect x="922.5" y="20.6" width="0.9" height="8.7"/><rect x="924.0" y="19.8" width="0.9" height="10.7"/><rect x="925.5" y="14.6" width="0.9" height="14.8"/><rect x="927.0" y="14.9" width="0.9" height="15.2"/><rect x="928.5" y="20.6" width="0.9" height="8.5"/><rect x="930.0" y="15.7" width="0.9" height="13.6"/><rect x="931.5" y="24.4" width="0.9" height="5.4"/><rect x="933.0" y="21.8" width="0.9" height="8.6"/><rect x="934.5" y="21.4" width="0.9" height="7.9"/><rect x="936.0" y="21.7" width="0.9" height="8.4"/><rect x="937.5" y="21.5" width="0.9" height="7.6"/><rect x="939.0" y="16.8" width="0.9" height="12.6"/><rect x="940.5" y="20.5" width="0.9" height="9.6"/><rect x="942.0" y="13.0" width="0.9" height="16.3"/><rect x="943.5" y="20.2" width="0.9" height="9.5"/><rect x="945.0" y="12.2" width="0.9" height="20.4"/><rect x="946.5" y="11.7" width="0.9" height="22.5"/><rect x="948.0" y="12.6" width="0.9" height="23.3"/><rect x="949.5" y="5.5" width="0.9" height="26.5"/><rect x="951.0" y="10.3" width="0.9" height="22.6"/><rect x="952.5" y="14.8" width="0.9" height="19.7"/><rect x="954.0" y="18.3" width="0.9" height="14.5"/><rect x="955.5" y="13.0" width="0.9" height="20.5"/><rect x="957.0" y="8.0" width="0.9" height="22.8"/><rect x="958.5" y="12.9" width="0.9" height="17.5"/><rect x="960.0" y="21.3" width="0.9" height="9.3"/><rect x="961.5" y="17.4" width="0.9" height="12.5"/><rect x="963.0" y="17.7" width="0.9" height="12.8"/><rect x="964.5" y="21.2" width="0.9" height="8.0"/><rect x="966.0" y="20.9" width="0.9" height="8.1"/><rect x="967.5" y="22.8" width="0.9" height="6.4"/><rect x="969.0" y="24.1" width="0.9" height="5.8"/><rect x="970.5" y="18.2" width="0.9" height="10.9"/><rect x="972.0" y="15.1" width="0.9" height="14.0"/><rect x="973.5" y="22.5" width="0.9" height="7.2"/><rect x="975.0" y="20.7" width="0.9" height="8.9"/><rect x="976.5" y="22.4" width="0.9" height="7.9"/><rect x="978.0" y="22.2" width="0.9" height="7.9"/><rect x="979.5" y="22.0" width="0.9" height="8.4"/><rect x="981.0" y="19.5" width="0.9" height="10.7"/><rect x="982.5" y="18.1" width="0.9" height="12.3"/><rect x="984.0" y="15.6" width="0.9" height="13.8"/><rect x="985.5" y="19.5" width="0.9" height="11.0"/><rect x="987.0" y="13.6" width="0.9" height="16.8"/><rect x="988.5" y="13.1" width="0.9" height="16.8"/><rect x="990.0" y="8.0" width="0.9" height="22.1"/><rect x="991.5" y="13.0" width="0.9" height="18.1"/><rect x="993.0" y="12.6" width="0.9" height="19.7"/><rect x="994.5" y="12.1" width="0.9" height="18.8"/><rect x="996.0" y="-1.5" width="0.9" height="38.8"/><rect x="997.5" y="3.0" width="0.9" height="34.1"/><rect x="999.0" y="6.1" width="0.9" height="28.5"/><rect x="1000.5" y="12.4" width="0.9" height="19.1"/><rect x="1002.0" y="9.2" width="0.9" height="23.3"/><rect x="1003.5" y="17.0" width="0.9" height="13.9"/><rect x="1005.0" y="11.2" width="0.9" height="18.4"/><rect x="1006.5" y="15.7" width="0.9" height="14.3"/><rect x="1008.0" y="13.2" width="0.9" height="16.2"/><rect x="1009.5" y="18.3" width="0.9" height="10.9"/><rect x="1011.0" y="22.4" width="0.9" height="7.0"/><rect x="1012.5" y="19.3" width="0.9" height="10.0"/><rect x="1014.0" y="23.0" width="0.9" height="7.3"/><rect x="1015.5" y="17.4" width="0.9" height="12.6"/><rect x="1017.0" y="21.6" width="0.9" height="8.1"/><rect x="1018.5" y="18.0" width="0.9" height="11.7"/><rect x="1020.0" y="20.4" width="0.9" height="9.0"/><rect x="1021.5" y="18.3" width="0.9" height="11.5"/><rect x="1023.0" y="24.2" width="0.9" height="6.1"/><rect x="1024.5" y="21.2" width="0.9" height="8.6"/><rect x="1026.0" y="20.6" width="0.9" height="8.8"/><rect x="1027.5" y="15.9" width="0.9" height="13.2"/><rect x="1029.0" y="14.9" width="0.9" height="14.2"/><rect x="1030.5" y="19.2" width="0.9" height="11.0"/><rect x="1032.0" y="22.2" width="0.9" height="8.3"/><rect x="1033.5" y="14.7" width="0.9" height="14.8"/><rect x="1035.0" y="16.8" width="0.9" height="13.2"/><rect x="1036.5" y="8.6" width="0.9" height="22.5"/><rect x="1038.0" y="7.6" width="0.9" height="25.7"/><rect x="1039.5" y="8.5" width="0.9" height="25.7"/><rect x="1041.0" y="5.0" width="0.9" height="31.3"/><rect x="1042.5" y="15.2" width="0.9" height="19.5"/><rect x="1044.0" y="4.1" width="0.9" height="30.4"/><rect x="1045.5" y="8.0" width="0.9" height="28.0"/><rect x="1047.0" y="9.7" width="0.9" height="22.6"/><rect x="1048.5" y="12.1" width="0.9" height="18.7"/><rect x="1050.0" y="15.6" width="0.9" height="14.9"/><rect x="1051.5" y="17.5" width="0.9" height="13.0"/><rect x="1053.0" y="17.1" width="0.9" height="12.2"/><rect x="1054.5" y="20.0" width="0.9" height="9.9"/><rect x="1056.0" y="17.4" width="0.9" height="13.0"/><rect x="1057.5" y="20.1" width="0.9" height="10.2"/><rect x="1059.0" y="14.3" width="0.9" height="15.4"/><rect x="1060.5" y="14.7" width="0.9" height="14.3"/><rect x="1062.0" y="17.8" width="0.9" height="12.5"/><rect x="1063.5" y="15.9" width="0.9" height="14.5"/><rect x="1065.0" y="18.3" width="0.9" height="11.7"/><rect x="1066.5" y="19.6" width="0.9" height="10.3"/><rect x="1068.0" y="20.0" width="0.9" height="10.1"/><rect x="1069.5" y="18.2" width="0.9" height="11.3"/><rect x="1071.0" y="19.4" width="0.9" height="10.4"/><rect x="1072.5" y="15.0" width="0.9" height="14.8"/><rect x="1074.0" y="18.9" width="0.9" height="11.6"/><rect x="1075.5" y="19.8" width="0.9" height="10.5"/><rect x="1077.0" y="21.6" width="0.9" height="9.0"/><rect x="1078.5" y="14.1" width="0.9" height="15.1"/><rect x="1080.0" y="12.0" width="0.9" height="18.3"/><rect x="1081.5" y="8.7" width="0.9" height="21.1"/><rect x="1083.0" y="18.8" width="0.9" height="12.6"/><rect x="1084.5" y="12.8" width="0.9" height="17.9"/><rect x="1086.0" y="6.7" width="0.9" height="25.5"/><rect x="1087.5" y="-0.3" width="0.9" height="30.6"/><rect x="1089.0" y="6.6" width="0.9" height="25.9"/><rect x="1090.5" y="8.8" width="0.9" height="23.5"/><rect x="1092.0" y="3.9" width="0.9" height="30.4"/><rect x="1093.5" y="15.8" width="0.9" height="16.8"/><rect x="1095.0" y="15.8" width="0.9" height="15.7"/><rect x="1096.5" y="9.4" width="0.9" height="20.3"/><rect x="1098.0" y="21.5" width="0.9" height="8.8"/><rect x="1099.5" y="22.2" width="0.9" height="7.0"/><rect x="1101.0" y="17.5" width="0.9" height="12.4"/><rect x="1102.5" y="15.4" width="0.9" height="13.6"/><rect x="1104.0" y="15.9" width="0.9" height="14.2"/><rect x="1105.5" y="19.9" width="0.9" height="9.5"/><rect x="1107.0" y="22.8" width="0.9" height="7.0"/><rect x="1108.5" y="20.0" width="0.9" height="9.6"/><rect x="1110.0" y="23.5" width="0.9" height="6.4"/><rect x="1111.5" y="14.3" width="0.9" height="15.6"/><rect x="1113.0" y="21.0" width="0.9" height="9.4"/><rect x="1114.5" y="15.2" width="0.9" height="15.1"/><rect x="1116.0" y="15.6" width="0.9" height="14.3"/><rect x="1117.5" y="14.3" width="0.9" height="16.1"/><rect x="1119.0" y="21.1" width="0.9" height="9.0"/><rect x="1120.5" y="21.3" width="0.9" height="9.1"/><rect x="1122.0" y="18.2" width="0.9" height="11.2"/><rect x="1123.5" y="21.4" width="0.9" height="7.9"/><rect x="1125.0" y="12.7" width="0.9" height="17.3"/><rect x="1126.5" y="20.7" width="0.9" height="9.0"/><rect x="1128.0" y="16.9" width="0.9" height="12.8"/><rect x="1129.5" y="9.1" width="0.9" height="21.5"/><rect x="1131.0" y="16.6" width="0.9" height="14.5"/><rect x="1132.5" y="16.0" width="0.9" height="16.2"/><rect x="1134.0" y="12.1" width="0.9" height="18.6"/><rect x="1135.5" y="8.7" width="0.9" height="22.3"/><rect x="1137.0" y="6.7" width="0.9" height="29.1"/><rect x="1138.5" y="16.3" width="0.9" height="18.0"/><rect x="1140.0" y="11.4" width="0.9" height="19.2"/><rect x="1141.5" y="8.6" width="0.9" height="21.6"/><rect x="1143.0" y="16.8" width="0.9" height="13.4"/><rect x="1144.5" y="18.9" width="0.9" height="11.1"/><rect x="1146.0" y="19.1" width="0.9" height="10.9"/><rect x="1147.5" y="21.0" width="0.9" height="8.2"/><rect x="1149.0" y="18.1" width="0.9" height="11.3"/><rect x="1150.5" y="15.9" width="0.9" height="14.1"/></svg>
<div class="a" style="left:110px;top:493.5px;width:1152px;height:1.3px;background:#1b3f7a"></div>
<svg style="left:107px;top:490px" width="7" height="7" viewBox="0 0 7 7"><circle cx="3.5" cy="3.5" r="2.6" fill="#e8f2fb" stroke="#4a86c0" stroke-width="0.8"/></svg>
<div class="t" style="left:112px;top:436.2px;font-size:9.8px;font-weight:bold;color:#6e6e6e;letter-spacing:-0.25px;text-shadow:1px 0 0 #000,-1px 0 0 #000,0 1px 0 #000,0 -1px 0 #000,1px 1px 0 #000,-1px -1px 0 #000,1px -1px 0 #000,-1px 1px 0 #000">Skateboard 02</div>
<div class="t" style="left:112px;top:480.5px;font-size:9.8px;font-weight:bold;color:#6e6e6e;letter-spacing:-0.25px;text-shadow:1px 0 0 #000,-1px 0 0 #000,0 1px 0 #000,0 -1px 0 #000,1px 1px 0 #000,-1px -1px 0 #000,1px -1px 0 #000,-1px 1px 0 #000">Skateboard 02</div>

<svg style="left:1265px;top:399px" width="9" height="8" viewBox="0 0 9 8"><path d="M4.5 1 L8 7 H1 Z" fill="#d0d0d0"/></svg>
<div class="a" style="left:1265px;top:408px;width:8px;height:244px;background:#2a2a2a"></div>
<div class="a" style="left:1265px;top:410px;width:8px;height:165px;background:#5a5a5a;border-radius:1px"></div>
<svg style="left:1265px;top:652px" width="9" height="8" viewBox="0 0 9 8"><path d="M4.5 7 L8 1 H1 Z" fill="#d0d0d0"/></svg>
<!-- bottom bar -->
<div class="a" style="left:7px;top:661px;width:1273px;height:18px;background:#1b1b1b"></div>
<svg style="left:6px;top:663px" width="100" height="14" viewBox="0 0 100 14">
  <circle cx="6.5" cy="6.5" r="5" fill="#7a7a7a"/><path d="M3.8 6.5 H9.2" stroke="#1b1b1b" stroke-width="1.3"/>
  <path d="M21 7 H72" stroke="#6a6a6a" stroke-width="1"/>
  <circle cx="71.5" cy="7" r="4.5" fill="#cfcfcf"/>
  <circle cx="93.5" cy="6.5" r="5" fill="#cfcfcf"/><path d="M90.8 6.5 H96.2 M93.5 3.8 V9.2" stroke="#1b1b1b" stroke-width="1.3"/>
</svg>
<svg style="left:110px;top:665px" width="8" height="8" viewBox="0 0 8 8"><path d="M7 0.5 V7.5 L1 4 Z" fill="#cfcfcf"/></svg>
<div class="a" style="left:121px;top:665.5px;width:1129px;height:7px;background:#2e2e2e;border-radius:1px"></div>
<div class="a" style="left:121px;top:665.5px;width:560px;height:7px;background:#5c5c5c;border-radius:1px"></div>
<svg style="left:1253px;top:665px" width="8" height="8" viewBox="0 0 8 8"><path d="M1 0.5 V7.5 L7 4 Z" fill="#cfcfcf"/></svg>
<div class="t" style="left:182.70px;top:352.52px;font-size:10.90px;color:#c4c4c4;transform:scaleX(0.886);transform-origin:0 0;">Éditer</div>
<!-- CONTEXT MENU -->
<div class="a" style="left:267px;top:131px;width:314px;height:548px;background:#f0f0f0">
<div class="mi" style="top:3.37px"><span class="l">Couper</span><span class="r" style="right:17.3px">Ctrl+X</span></div>
<div class="mi" style="top:24.00px"><span class="l">Copier</span><span class="r" style="right:17.3px">Ctrl+C</span></div>
<div class="mi" style="top:44.63px"><span class="l">Copier les attributs de l'image clé</span></div>
<div class="mi d" style="top:65.26px"><span class="l">Coller</span><span class="r" style="right:17.5px">Ctrl+V</span></div>
<svg style="left:301px;top:70.85999999999999px" width="6" height="9" viewBox="0 0 6 9" fill="none" stroke="#a8a8a8" stroke-width="1.1"><path d="M1.2 1 L4.6 4.5 L1.2 8"/></svg>
<div class="mi d" style="top:85.89px"><span class="l">Coller les attributs de l'image clé</span></div>
<div class="mi" style="top:106.52px"><span class="l">Éditer l'alias...</span></div>
<div class="mi" style="top:127.15px"><span class="l">Supprimer</span><span class="r" style="right:17.3px">Del</span></div>
<div class="sep" style="top:149.23px"></div>
<div class="mi" style="top:152.52px"><span class="l">Activer</span><span class="r" style="right:17.3px">Shift+E</span></div>
<div class="a" style="left:2.2px;top:152.52px;width:20px;height:19.8px;background:#91c9f7"></div><svg style="left:6px;top:157.52px" width="12" height="10" viewBox="0 0 12 10" fill="none" stroke="#0d2a48" stroke-width="1.4"><path d="M1 5 L4.3 8.3 L11 1.5"/></svg>
<div class="mi" style="top:173.15px"><span class="l">Délier/délier vidéo et audio</span></div>
<div class="mi d" style="top:193.78px"><span class="l">Grouper les clips</span><span class="r" style="right:17.3px">Ctrl+G</span></div>
<div class="mi d" style="top:214.41px"><span class="l">Dégrouper les clips</span><span class="r" style="right:17.3px">Ctrl+Shift+G</span></div>
<div class="sep" style="top:236.49px"></div>
<div class="mi d" style="top:239.78px"><span class="l">Fractionner</span><span class="r" style="right:17.3px">Ctrl+T</span></div>
<div class="mi d" style="top:260.41px"><span class="l">Combiner</span></div>
<div class="sep" style="top:282.49px"></div>
<div class="mi" style="top:285.78px"><span class="l">Silence clip</span></div>
<div class="mi d" style="top:306.41px"><span class="l">Réinitialiser le niveau de volume</span></div>
<div class="mi d" style="top:327.04px"><span class="l">Audio normalisé</span></div>
<div class="mi" style="top:347.67px"><span class="l">Régénérer la forme d'onde</span></div>
<div class="sep" style="top:369.75px"></div>
<div class="mi" style="top:373.04px"><span class="l">Éditer dans Concepteur PiP...</span></div>
<div class="mi h" style="top:393.67px;left:2px;width:308px"><span class="l" style="left:27.2px">Éditer Vidéo</span></div>
<svg style="left:300px;top:399.27px" width="6" height="9" viewBox="0 0 6 9" fill="none" stroke="#404850" stroke-width="1.1"><path d="M1.2 1 L4.6 4.5 L1.2 8"/></svg>
<div class="mi" style="top:414.30px"><span class="l">Modifier l’audio</span></div>
<svg style="left:300px;top:419.9px" width="6" height="9" viewBox="0 0 6 9" fill="none" stroke="#505050" stroke-width="1.1"><path d="M1.2 1 L4.6 4.5 L1.2 8"/></svg>
<div class="mi" style="top:434.93px"><span class="l">Éditer l'image clé du clip</span></div>
<svg style="left:300px;top:440.53px" width="6" height="9" viewBox="0 0 6 9" fill="none" stroke="#505050" stroke-width="1.1"><path d="M1.2 1 L4.6 4.5 L1.2 8"/></svg>
<div class="mi" style="top:455.56px"><span class="l">Définir le format du clip</span></div>
<svg style="left:300px;top:461.15999999999997px" width="6" height="9" viewBox="0 0 6 9" fill="none" stroke="#505050" stroke-width="1.1"><path d="M1.2 1 L4.6 4.5 L1.2 8"/></svg>
<div class="mi" style="top:476.19px"><span class="l">Marqueur de clip</span></div>
<svg style="left:300px;top:481.78999999999996px" width="6" height="9" viewBox="0 0 6 9" fill="none" stroke="#505050" stroke-width="1.1"><path d="M1.2 1 L4.6 4.5 L1.2 8"/></svg>
<div class="sep" style="top:498.27px"></div>
<div class="mi" style="top:501.56px"><span class="l">Transcription Vocale</span></div>
<div class="sep" style="top:523.64px"></div>
<div class="mi" style="top:526.93px"><span class="l">Propriétés</span></div>
</div>
<div class="a" style="left:577px;top:522px;width:391px;height:157px;background:#f0f0f0;border-left:1px solid #d4d4d4">
<div class="mi" style="top:2.60px"><span class="l">Découper...</span><span class="r" style="right:17.5px">Ctrl+Alt+T</span></div>
<div class="mi" style="top:23.23px"><span class="l">Suiveur de mouvement</span></div>
<div class="mi" style="top:43.86px"><span class="l">Magic Cut</span></div>
<div class="mi h" style="top:64.49px;left:1px;width:388px"><span class="l" style="left:28.2px">Ajustement</span></div>
<div class="mi" style="top:85.12px"><span class="l">Arrêt sur image</span></div>
<div class="mi" style="top:105.75px"><span class="l">Réinitialiser le niveau d'opacité</span></div>
<div class="mi" style="top:126.38px"><span class="l">Définir le mode de fusion</span></div>
<svg style="left:377px;top:131.98px" width="6" height="9" viewBox="0 0 6 9" fill="none" stroke="#505050" stroke-width="1.1"><path d="M1.2 1 L4.6 4.5 L1.2 8"/></svg>
<div class="sep" style="top:148.46px;left:27px"></div>
<div class="mi" style="top:151.75px"><span class="l">Convertir en ...</span></div>
</div>
</body></html>
